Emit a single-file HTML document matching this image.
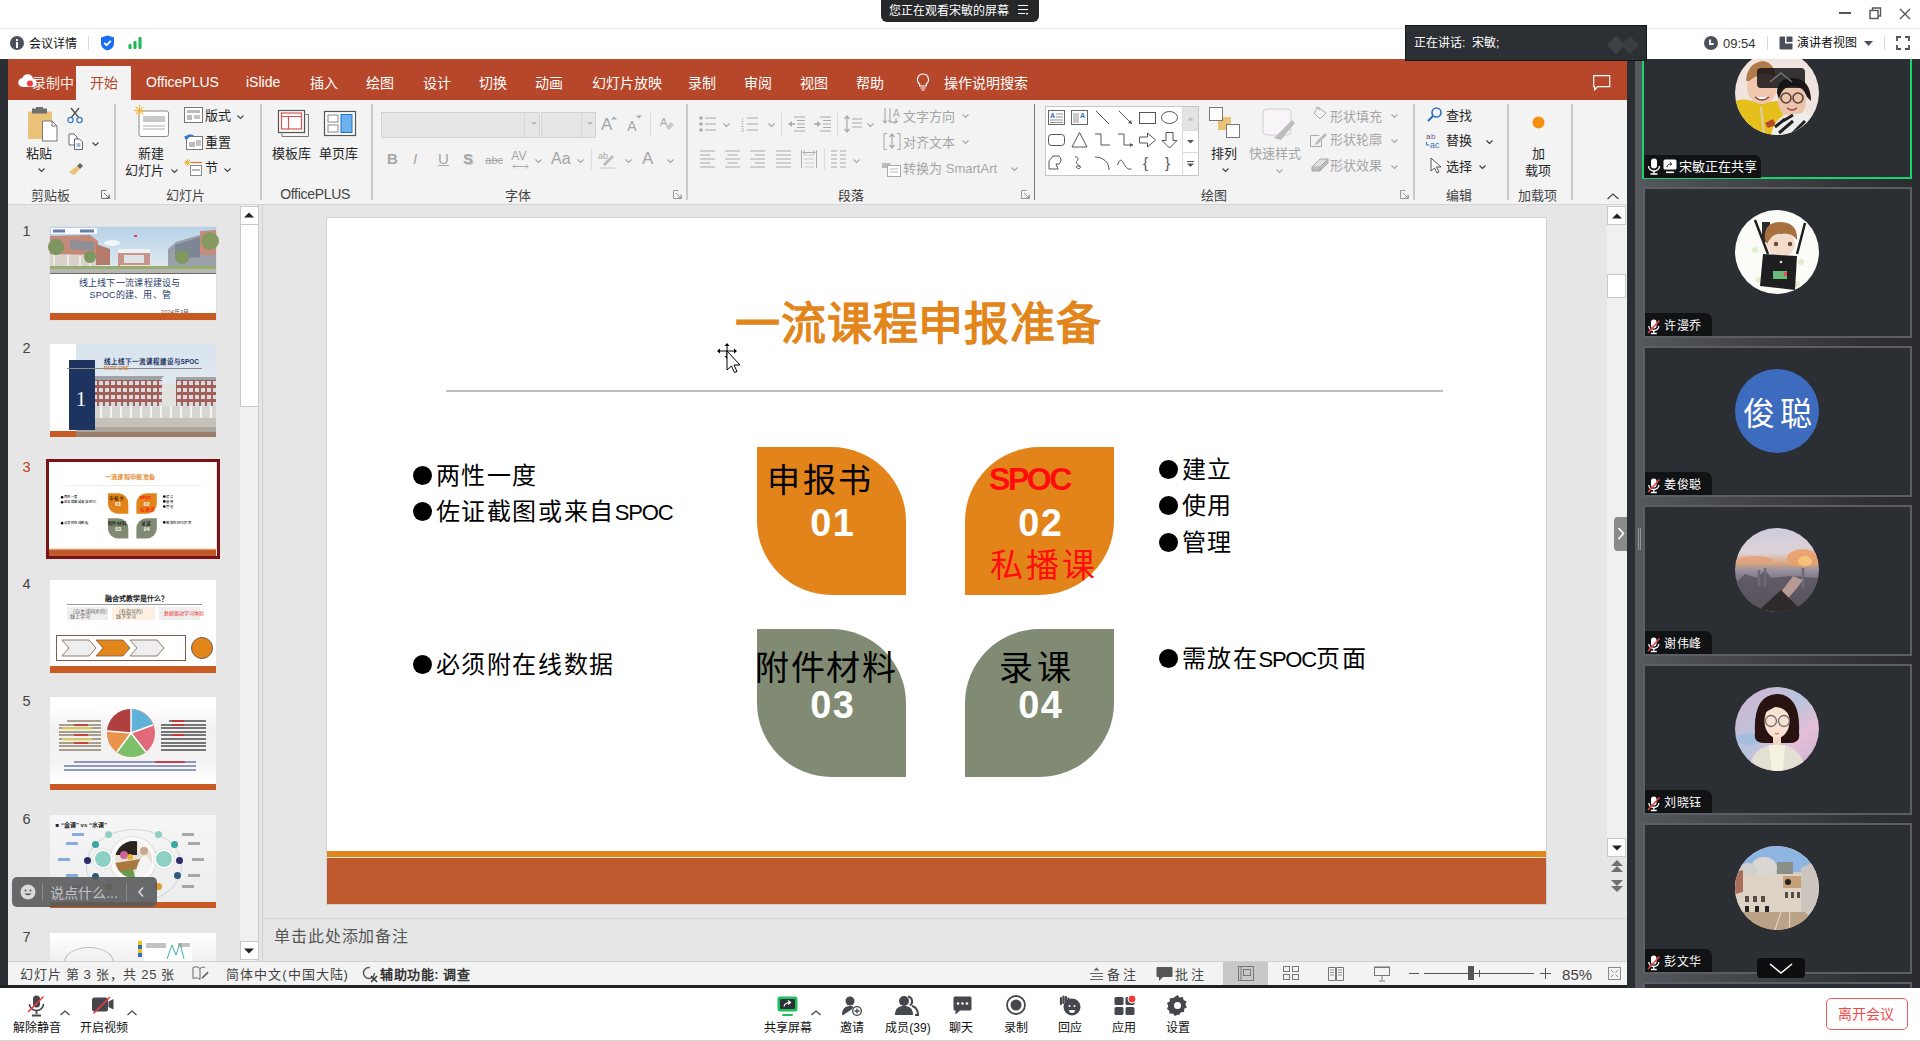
<!DOCTYPE html>
<html lang="zh-CN">
<head>
<meta charset="utf-8">
<style>
*{box-sizing:border-box;margin:0;padding:0}
html,body{width:1920px;height:1041px;overflow:hidden;background:#fff;font-family:"Liberation Sans",sans-serif;position:relative}
.a{position:absolute}
.t{position:absolute;white-space:nowrap;line-height:1}
svg{position:absolute;overflow:visible}
</style>
</head>
<body>
<!-- ============ TOP TENCENT BAR ============ -->
<div class="a" style="left:0;top:28px;width:1920px;height:1px;background:#e6e8ec"></div>
<div class="a" style="left:881px;top:0;width:158px;height:22px;background:#262729;border-radius:0 0 6px 6px"></div>
<div class="t" style="left:889px;top:5px;font-size:12px;color:#fff">您正在观看宋敏的屏幕</div>
<svg style="left:1017px;top:4px" width="12" height="12"><path d="M1 1.5h10M1 5.5h10M1 9.5h7" stroke="#fff" stroke-width="1.2"/><path d="M8.5 9l1.5 2 1.5-2z" fill="#fff"/></svg>
<!-- window controls -->
<div class="a" style="left:1839px;top:12px;width:12px;height:1.5px;background:#555"></div>
<svg style="left:1869px;top:7px" width="13" height="13"><rect x="1" y="3.5" width="8" height="8" fill="none" stroke="#555" stroke-width="1.4"/><path d="M3.5 3.5V1h8v8H9" fill="none" stroke="#555" stroke-width="1.4"/></svg>
<svg style="left:1899px;top:8px" width="12" height="12"><path d="M1 1l10 10M11 1L1 11" stroke="#555" stroke-width="1.4"/></svg>
<!-- meeting info row -->
<div class="a" style="left:10px;top:36px;width:14px;height:14px;border-radius:50%;background:#4b505b"></div>
<div class="a" style="left:16px;top:39px;width:2px;height:2px;background:#fff"></div>
<div class="a" style="left:16px;top:42px;width:2px;height:6px;background:#fff"></div>
<div class="t" style="left:29px;top:38px;font-size:12px;color:#111">会议详情</div>
<div class="a" style="left:88px;top:36px;width:1px;height:14px;background:#d8d8d8"></div>
<svg style="left:100px;top:35px" width="15" height="16"><path d="M7.5 0.5L14 2.5V8.5C14 12 11 14.5 7.5 15.5C4 14.5 1 12 1 8.5V2.5Z" fill="#1a6ef5"/><path d="M4.3 8l2.3 2.2 4.2-4.4" stroke="#fff" stroke-width="1.8" fill="none"/></svg>
<svg style="left:128px;top:36px" width="14" height="14"><rect x="0.5" y="8" width="3" height="5" rx="1" fill="#19b955"/><rect x="5.5" y="5" width="3" height="8" rx="1" fill="#19b955"/><rect x="10.5" y="1" width="3" height="12" rx="1" fill="#19b955"/></svg>
<!-- right info -->
<svg style="left:1704px;top:36px" width="14" height="14"><circle cx="7" cy="7" r="7" fill="#4b505b"/><path d="M6 3.5V8h3.5" stroke="#fff" stroke-width="1.8" fill="none"/></svg>
<div class="t" style="left:1723px;top:37px;font-size:13px;color:#333">09:54</div>
<div class="a" style="left:1767px;top:36px;width:1px;height:14px;background:#d8d8d8"></div>
<svg style="left:1779px;top:36px" width="14" height="14"><path d="M1.5 0.5h4.5v7h7.5v5a1 1 0 0 1-1 1H1.5a1 1 0 0 1-1-1V1.5a1 1 0 0 1 1-1z M7.5 0.5h5a1 1 0 0 1 1 1V6H7.5z" fill="#4b505b"/></svg>
<div class="t" style="left:1797px;top:37px;font-size:12px;color:#111">演讲者视图</div>
<svg style="left:1864px;top:41px" width="9" height="5"><path d="M0 0h9L4.5 5z" fill="#4b505b"/></svg>
<div class="a" style="left:1884px;top:36px;width:1px;height:14px;background:#d8d8d8"></div>
<svg style="left:1896px;top:36px" width="14" height="14"><path d="M1 5V1h4M9 1h4v4M13 9v4H9M5 13H1V9" stroke="#4b505b" stroke-width="1.8" fill="none"/></svg>

<!-- ============ LEFT DARK STRIP ============ -->
<div class="a" style="left:0;top:59px;width:8px;height:929px;background:#2b2e32"></div>

<!-- ============ PPT TAB BAR ============ -->
<div class="a" style="left:8px;top:59px;width:1619px;height:41px;background:#b7472a"></div>
<div class="a" style="left:76px;top:66px;width:55px;height:34px;background:#f3f3f3"></div>
<div class="t" style="left:90px;top:76px;font-size:14px;color:#b7472a">开始</div>
<div class="t" style="left:146px;top:75px;font-size:14px;color:#fff">OfficePLUS</div>
<div class="t" style="left:246px;top:75px;font-size:14px;color:#fff">iSlide</div>
<div class="t" style="left:310px;top:76px;font-size:14px;color:#fff">插入</div>
<div class="t" style="left:366px;top:76px;font-size:14px;color:#fff">绘图</div>
<div class="t" style="left:423px;top:76px;font-size:14px;color:#fff">设计</div>
<div class="t" style="left:479px;top:76px;font-size:14px;color:#fff">切换</div>
<div class="t" style="left:535px;top:76px;font-size:14px;color:#fff">动画</div>
<div class="t" style="left:592px;top:76px;font-size:14px;color:#fff">幻灯片放映</div>
<div class="t" style="left:688px;top:76px;font-size:14px;color:#fff">录制</div>
<div class="t" style="left:744px;top:76px;font-size:14px;color:#fff">审阅</div>
<div class="t" style="left:800px;top:76px;font-size:14px;color:#fff">视图</div>
<div class="t" style="left:856px;top:76px;font-size:14px;color:#fff">帮助</div>
<div class="t" style="left:944px;top:76px;font-size:14px;color:#fff">操作说明搜索</div>
<svg style="left:18px;top:74px" width="20" height="14"><path d="M5 13a4.5 4.5 0 0 1-.5-9A5.5 5.5 0 0 1 15 4.5a4.3 4.3 0 0 1 0 8.5z" fill="#fff"/><circle cx="12" cy="9.5" r="3" fill="#f23c3c"/></svg>
<div class="t" style="left:32px;top:76px;font-size:14px;color:#fff;opacity:.9">录制中</div>
<svg style="left:916px;top:73px" width="14" height="18"><path d="M7 1a5.5 5.5 0 0 0-3.3 9.9V13h6.6v-2.1A5.5 5.5 0 0 0 7 1z" fill="none" stroke="#fff" stroke-width="1.2"/><path d="M4.5 15h5M5.5 17h3" stroke="#fff" stroke-width="1.2"/></svg>
<svg style="left:1593px;top:75px" width="18" height="16"><path d="M0.7 0.7h16v11h-12l-3 3v-3h-1z" fill="none" stroke="#fff" stroke-width="1.2"/></svg>

<!-- ============ RIBBON ============ -->
<div class="a" style="left:8px;top:100px;width:1619px;height:104px;background:#f3f3f3"></div>
<div class="a" style="left:8px;top:204px;width:1619px;height:1px;background:#d5d5d5"></div>
<div class="a" style="left:114px;top:104px;width:2px;height:96px;background:#cacaca;"></div>
<div class="a" style="left:260px;top:104px;width:2px;height:96px;background:#cacaca;"></div>
<div class="a" style="left:371px;top:104px;width:2px;height:96px;background:#cacaca;"></div>
<div class="a" style="left:686px;top:104px;width:2px;height:96px;background:#cacaca;"></div>
<div class="a" style="left:1413px;top:104px;width:2px;height:96px;background:#cacaca;"></div>
<div class="a" style="left:1507px;top:104px;width:2px;height:96px;background:#cacaca;"></div>
<div class="a" style="left:1571px;top:104px;width:2px;height:96px;background:#cacaca;"></div>
<div class="a" style="left:1034px;top:104px;width:1px;height:96px;background:#7a7a7a;"></div>
<svg style="left:27px;top:107px" width="32" height="36" viewBox="0 0 32 36"><rect x="1" y="4.5" width="24" height="27.5" rx="1" fill="#eac27a"/><path d="M5 1.5h15v5H5z" fill="#6f6f6f"/><rect x="9" y="0" width="7" height="4" fill="#6f6f6f"/><path d="M15.5 14h9.5l5 5v15h-14.5z" fill="#fff" stroke="#777" stroke-width="1"/><path d="M25 14v5h5" fill="none" stroke="#777" stroke-width="1"/></svg>
<div class="t" style="left:26.2px;top:146.5px;font-size:13px;color:#262626;font-weight:normal;">粘贴</div>
<svg style="left:38px;top:168px" width="7" height="4" viewBox="0 0 7 4"><path d="M0.5 0.5L3.5 3.5L6.5 0.5" fill="none" stroke="#444" stroke-width="1.1"/></svg>
<svg style="left:67px;top:107px" width="16" height="17" viewBox="0 0 16 17"><path d="M4 1l8 10M12 1L4 11" stroke="#555" stroke-width="1.4"/><circle cx="3.5" cy="13" r="2.6" fill="none" stroke="#3c7dc4" stroke-width="1.3"/><circle cx="12.5" cy="13" r="2.6" fill="none" stroke="#3c7dc4" stroke-width="1.3"/></svg>
<svg style="left:68px;top:133px" width="16" height="17" viewBox="0 0 16 17"><path d="M1 1h5l3 3v8H1z" fill="#fff" stroke="#666" stroke-width="1"/><path d="M6.5 6h5l3 3v7.5h-8z" fill="#fff" stroke="#666" stroke-width="1"/><path d="M8.5 11h4M8.5 13h4" stroke="#3c7dc4" stroke-width="1"/></svg>
<svg style="left:92px;top:142px" width="7" height="4" viewBox="0 0 7 4"><path d="M0.5 0.5L3.5 3.5L6.5 0.5" fill="none" stroke="#444" stroke-width="1.1"/></svg>
<svg style="left:67px;top:160px" width="18" height="16" viewBox="0 0 18 16"><path d="M10 6l3-3 3 3-3 3z" fill="#666"/><path d="M2 12l8-6 3 3-6 6z" fill="#eac27a"/></svg>
<div class="t" style="left:31.2px;top:188.5px;font-size:13px;color:#444;font-weight:normal;">剪贴板</div>
<svg style="left:101px;top:190px" width="9" height="9" viewBox="0 0 9 9"><path d="M0.5 0.5h5M0.5 0.5v8h8v-3" fill="none" stroke="#777" stroke-width="1"/><path d="M3 3l5 5M8 4.5V8H4.5" fill="none" stroke="#777" stroke-width="1"/></svg>
<svg style="left:134px;top:105px" width="36" height="33" viewBox="0 0 36 33"><rect x="5" y="6" width="29.5" height="25.5" rx="2" fill="#fff" stroke="#8a8a8a" stroke-width="1"/><rect x="9" y="11" width="22" height="6" fill="#c9c9c9"/><path d="M9 21h22M9 24h22" stroke="#9a9a9a" stroke-width="0.8"/><g stroke="#f2b43c" stroke-width="1.1"><path d="M5.5 0v11M0 5.5h11M1.8 1.8l7.4 7.4M9.2 1.8L1.8 9.2"/></g></svg>
<div class="t" style="left:138.2px;top:146.5px;font-size:13px;color:#262626;font-weight:normal;">新建</div>
<div class="t" style="left:125.2px;top:163.5px;font-size:13px;color:#262626;font-weight:normal;">幻灯片</div>
<svg style="left:171px;top:169px" width="7" height="4" viewBox="0 0 7 4"><path d="M0.5 0.5L3.5 3.5L6.5 0.5" fill="none" stroke="#444" stroke-width="1.1"/></svg>
<svg style="left:184px;top:107px" width="20" height="17" viewBox="0 0 20 17"><rect x="0.5" y="0.5" width="18" height="15" fill="#fff" stroke="#777"/><rect x="3" y="3" width="13" height="3" fill="#bbb"/><rect x="3" y="8" width="5" height="5" fill="#bbb"/><path d="M10 9h6M10 11h6" stroke="#888" stroke-width="1"/></svg>
<div class="t" style="left:205.2px;top:108.5px;font-size:13px;color:#262626;font-weight:normal;">版式</div>
<svg style="left:237px;top:115px" width="7" height="4" viewBox="0 0 7 4"><path d="M0.5 0.5L3.5 3.5L6.5 0.5" fill="none" stroke="#444" stroke-width="1.1"/></svg>
<svg style="left:184px;top:133px" width="20" height="17" viewBox="0 0 20 17"><rect x="2.5" y="3.5" width="16" height="13" fill="#fff" stroke="#777"/><rect x="5" y="9" width="6" height="5" fill="#bbb"/><path d="M12 8h5M12 10h5M12 12h5" stroke="#888" stroke-width="1"/><path d="M1.5 6a5 4 0 0 1 8-3" fill="none" stroke="#2f7ad3" stroke-width="1.5"/><path d="M0 3l2.5 4 3-3z" fill="#2f7ad3"/></svg>
<div class="t" style="left:205.2px;top:135.5px;font-size:13px;color:#262626;font-weight:normal;">重置</div>
<svg style="left:184px;top:159px" width="20" height="18" viewBox="0 0 20 18"><g stroke="#f2b43c" stroke-width="1"><path d="M3.5 0v7M0 3.5h7M1 1l5 5M6 1L1 6"/></g><path d="M7 3.5h11" stroke="#d27b3a" stroke-width="1.2"/><rect x="6.5" y="6.5" width="11" height="10" fill="#fff" stroke="#888"/><rect x="8" y="10" width="8" height="2" fill="#bbb"/></svg>
<div class="t" style="left:205.2px;top:160.5px;font-size:13px;color:#262626;font-weight:normal;">节</div>
<svg style="left:224px;top:168px" width="7" height="4" viewBox="0 0 7 4"><path d="M0.5 0.5L3.5 3.5L6.5 0.5" fill="none" stroke="#444" stroke-width="1.1"/></svg>
<div class="t" style="left:166.2px;top:188.5px;font-size:13px;color:#444;font-weight:normal;">幻灯片</div>
<svg style="left:278px;top:110px" width="32" height="28" viewBox="0 0 32 28"><path d="M4 23.5v3h26.5V4.5h-3" fill="none" stroke="#777" stroke-width="1"/><rect x="0.5" y="0.5" width="26" height="22" fill="#fff" stroke="#555" stroke-width="1.2"/><rect x="3.5" y="3" width="20" height="16" fill="none" stroke="#d9534f" stroke-width="1.2"/><path d="M3.5 6.5h20M10.5 6.5V19" stroke="#d9534f" stroke-width="1.2"/></svg>
<svg style="left:324px;top:111px" width="32" height="25" viewBox="0 0 32 25"><rect x="0.5" y="0.5" width="31" height="24" fill="#fff" stroke="#555" stroke-width="1.2"/><rect x="4" y="4" width="10" height="7" fill="#fff" stroke="#888"/><rect x="4" y="14" width="10" height="7" fill="#fff" stroke="#888"/><rect x="17" y="3.5" width="11" height="18" fill="#6cb2ef" stroke="#1f6fc5" stroke-width="1"/></svg>
<div class="t" style="left:272.2px;top:146.5px;font-size:13px;color:#262626;font-weight:normal;">模板库</div>
<div class="t" style="left:319.2px;top:146.5px;font-size:13px;color:#262626;font-weight:normal;">单页库</div>
<div class="t" style="left:280.2px;top:187.2px;font-size:14px;color:#444;font-weight:normal;letter-spacing:-0.3px">OfficePLUS</div>
<div class="a" style="left:381px;top:112px;width:159px;height:26px;background:#e6e6e6;border:1px solid #d2d2d2"></div>
<div class="a" style="left:524px;top:113px;width:1px;height:24px;background:#d8d8d8;"></div>
<svg style="left:531px;top:122px" width="7" height="4" viewBox="0 0 7 4"><path d="M0 0h6L3 3z" fill="#bbb"/></svg>
<div class="a" style="left:541px;top:112px;width:55px;height:26px;background:#e6e6e6;border:1px solid #d2d2d2"></div>
<div class="a" style="left:581px;top:113px;width:1px;height:24px;background:#d8d8d8;"></div>
<svg style="left:587px;top:122px" width="7" height="4" viewBox="0 0 7 4"><path d="M0 0h6L3 3z" fill="#bbb"/></svg>
<div class="t" style="left:601.0px;top:115.8px;font-size:17px;color:#a6a6a6;font-weight:normal;">A</div>
<svg style="left:611px;top:116px" width="6" height="4" viewBox="0 0 6 4"><path d="M0 3.5L3 0.5 6 3.5z" fill="#aaa"/></svg>
<div class="t" style="left:627.2px;top:119.2px;font-size:14px;color:#a6a6a6;font-weight:normal;">A</div>
<svg style="left:636px;top:115px" width="6" height="4" viewBox="0 0 6 4"><path d="M0 0.5L3 3.5 6 0.5z" fill="#aaa"/></svg>
<div class="a" style="left:650px;top:113px;width:1px;height:24px;background:#dcdcdc;"></div>
<svg style="left:660px;top:116px" width="15" height="16" viewBox="0 0 15 16"><text x="0" y="10" font-size="11" fill="#aaa" font-family="Liberation Sans">A</text><path d="M6 11l5-5 3 3-5 5z" fill="#c8c8c8"/></svg>
<div class="t" style="left:387.1px;top:151.1px;font-size:15px;color:#a6a6a6;font-weight:bold;">B</div>
<div class="t" style="left:413.1px;top:151.1px;font-size:15px;color:#a6a6a6;font-weight:normal;"><i>I</i></div>
<div class="t" style="left:438.1px;top:151.1px;font-size:15px;color:#a6a6a6;font-weight:normal;"><u>U</u></div>
<div class="t" style="left:463.1px;top:151.1px;font-size:15px;color:#a6a6a6;font-weight:bold;text-shadow:1px 1px 1px #ccc">S</div>
<div class="t" style="left:485.3px;top:154.6px;font-size:11px;color:#a6a6a6;font-weight:normal;"><s>abc</s></div>
<div class="t" style="left:511.3px;top:150.4px;font-size:12px;color:#a6a6a6;font-weight:normal;">AV</div>
<svg style="left:512px;top:164px" width="17" height="5" viewBox="0 0 17 5"><path d="M1 2.5h15M3 0.5l-2 2 2 2M14 0.5l2 2-2 2" fill="none" stroke="#aaa" stroke-width="1"/></svg>
<svg style="left:535px;top:159px" width="7" height="4" viewBox="0 0 7 4"><path d="M0.5 0.5L3.5 3.5L6.5 0.5" fill="none" stroke="#a6a6a6" stroke-width="1.1"/></svg>
<div class="t" style="left:551.0px;top:150.9px;font-size:16px;color:#a6a6a6;font-weight:normal;">Aa</div>
<svg style="left:577px;top:159px" width="7" height="4" viewBox="0 0 7 4"><path d="M0.5 0.5L3.5 3.5L6.5 0.5" fill="none" stroke="#a6a6a6" stroke-width="1.1"/></svg>
<div class="a" style="left:591px;top:148px;width:1px;height:22px;background:#dcdcdc;"></div>
<svg style="left:598px;top:150px" width="18" height="19" viewBox="0 0 18 19"><text x="0" y="9" font-size="9" fill="#aaa" font-family="Liberation Sans">ab</text><path d="M5 14l9-9 2 2-9 9z" fill="#bbb"/><rect x="1" y="17" width="16" height="2" fill="#ddd"/></svg>
<svg style="left:625px;top:159px" width="7" height="4" viewBox="0 0 7 4"><path d="M0.5 0.5L3.5 3.5L6.5 0.5" fill="none" stroke="#a6a6a6" stroke-width="1.1"/></svg>
<div class="t" style="left:642.0px;top:149.8px;font-size:17px;color:#a6a6a6;font-weight:normal;">A</div>
<svg style="left:667px;top:159px" width="7" height="4" viewBox="0 0 7 4"><path d="M0.5 0.5L3.5 3.5L6.5 0.5" fill="none" stroke="#a6a6a6" stroke-width="1.1"/></svg>
<div class="t" style="left:505.2px;top:188.5px;font-size:13px;color:#444;font-weight:normal;">字体</div>
<svg style="left:673px;top:190px" width="9" height="9" viewBox="0 0 9 9"><path d="M0.5 0.5h5M0.5 0.5v8h8v-3" fill="none" stroke="#999" stroke-width="1"/><path d="M3 3l5 5M8 4.5V8H4.5" fill="none" stroke="#999" stroke-width="1"/></svg>
<svg style="left:699px;top:116px" width="18" height="17" viewBox="0 0 18 17"><circle cx="2" cy="2" r="1.8" fill="#aaa"/><circle cx="2" cy="8" r="1.8" fill="#aaa"/><circle cx="2" cy="14" r="1.8" fill="#aaa"/><path d="M6 2h11M6 8h11M6 14h11" stroke="#aaa" stroke-width="1"/></svg>
<svg style="left:723px;top:123px" width="7" height="4" viewBox="0 0 7 4"><path d="M0.5 0.5L3.5 3.5L6.5 0.5" fill="none" stroke="#a6a6a6" stroke-width="1.1"/></svg>
<svg style="left:741px;top:116px" width="18" height="17" viewBox="0 0 18 17"><text x="0" y="6" font-size="5" fill="#aaa" font-family="Liberation Sans">1</text><text x="0" y="11" font-size="5" fill="#aaa" font-family="Liberation Sans">2</text><text x="0" y="16" font-size="5" fill="#aaa" font-family="Liberation Sans">3</text><path d="M6 2h11M6 8h11M6 14h11" stroke="#aaa" stroke-width="1"/></svg>
<svg style="left:768px;top:123px" width="7" height="4" viewBox="0 0 7 4"><path d="M0.5 0.5L3.5 3.5L6.5 0.5" fill="none" stroke="#a6a6a6" stroke-width="1.1"/></svg>
<div class="a" style="left:781px;top:113px;width:1px;height:24px;background:#dcdcdc;"></div>
<svg style="left:787px;top:116px" width="18" height="17" viewBox="0 0 18 17"><path d="M7 1h11M10 4.5h8M10 8h8M10 11.5h8M7 15h11" stroke="#aaa" stroke-width="1"/><path d="M1 8l4-3v6z" fill="#aaa"/><path d="M4 8h4" stroke="#aaa" stroke-width="1.5"/></svg>
<svg style="left:813px;top:116px" width="18" height="17" viewBox="0 0 18 17"><path d="M7 1h11M10 4.5h8M10 8h8M10 11.5h8M7 15h11" stroke="#aaa" stroke-width="1"/><path d="M8 8l-4-3v6z" fill="#aaa"/><path d="M1 8h4" stroke="#aaa" stroke-width="1.5"/></svg>
<div class="a" style="left:837px;top:113px;width:1px;height:24px;background:#dcdcdc;"></div>
<svg style="left:844px;top:115px" width="18" height="19" viewBox="0 0 18 19"><path d="M3 1v16M0.5 4L3 1l2.5 3M0.5 14L3 17l2.5-3" fill="none" stroke="#aaa" stroke-width="1.2"/><path d="M8 4h10M8 8h10M8 12h10" stroke="#aaa" stroke-width="1"/></svg>
<svg style="left:867px;top:123px" width="7" height="4" viewBox="0 0 7 4"><path d="M0.5 0.5L3.5 3.5L6.5 0.5" fill="none" stroke="#a6a6a6" stroke-width="1.1"/></svg>
<svg style="left:700px;top:150px" width="16" height="18" viewBox="0 0 16 18"><path d="M0 1h15M0 5h10M0 9h15M0 13h10M0 17h15" stroke="#aaa" stroke-width="1"/></svg>
<svg style="left:725px;top:150px" width="16" height="18" viewBox="0 0 16 18"><path d="M0 1h15M2.5 5h10M0 9h15M2.5 13h10M0 17h15" stroke="#aaa" stroke-width="1"/></svg>
<svg style="left:750px;top:150px" width="16" height="18" viewBox="0 0 16 18"><path d="M0 1h15M5 5h10M0 9h15M5 13h10M0 17h15" stroke="#aaa" stroke-width="1"/></svg>
<svg style="left:776px;top:150px" width="16" height="18" viewBox="0 0 16 18"><path d="M0 1h15M0 5h15M0 9h15M0 13h15M0 17h15" stroke="#aaa" stroke-width="1"/></svg>
<svg style="left:801px;top:150px" width="16" height="18" viewBox="0 0 16 18"><path d="M0.5 0v18M15.5 0v18" stroke="#aaa" stroke-width="1"/><path d="M3 5h10M3 9h10M3 13h10M3 17h10" stroke="#ccc" stroke-width="1"/><path d="M2 2.5h12M2 2.5l2-2M2 2.5l2 2M14 2.5l-2-2M14 2.5l-2 2" stroke="#aaa" stroke-width="1" fill="none"/></svg>
<div class="a" style="left:824px;top:148px;width:1px;height:22px;background:#dcdcdc;"></div>
<svg style="left:831px;top:150px" width="16" height="18" viewBox="0 0 16 18"><path d="M0 1h6M0 5h6M0 9h6M0 13h6M0 17h6M9 1h6M9 5h6M9 9h6M9 13h6M9 17h6" stroke="#aaa" stroke-width="1"/></svg>
<svg style="left:853px;top:159px" width="7" height="4" viewBox="0 0 7 4"><path d="M0.5 0.5L3.5 3.5L6.5 0.5" fill="none" stroke="#a6a6a6" stroke-width="1.1"/></svg>
<svg style="left:883px;top:107px" width="18" height="18" viewBox="0 0 18 18"><path d="M2 1v15M0 13.5l2 2.5 2-2.5M7 1v15M5 13.5l7 2.5 2-2.5M7 1v15" fill="none" stroke="#aaa" stroke-width="1.1"/><text x="10" y="10" font-size="10" fill="#aaa" font-family="Liberation Sans">A</text><path d="M13 11v5M11 14l2 2 2-2" stroke="#aaa" fill="none"/></svg>
<div class="t" style="left:903.2px;top:109.5px;font-size:13px;color:#a6a6a6;font-weight:normal;">文字方向</div>
<svg style="left:962px;top:114px" width="7" height="4" viewBox="0 0 7 4"><path d="M0.5 0.5L3.5 3.5L6.5 0.5" fill="none" stroke="#a6a6a6" stroke-width="1.1"/></svg>
<svg style="left:883px;top:133px" width="18" height="18" viewBox="0 0 18 18"><path d="M1 0.5h3M1 0.5v16h3M17 0.5h-3M17 0.5v16h-3" fill="none" stroke="#aaa" stroke-width="1"/><path d="M9 1v14M6.5 4L9 1l2.5 3M6.5 12L9 15l2.5-3" fill="none" stroke="#aaa" stroke-width="1.2"/></svg>
<div class="t" style="left:903.2px;top:135.5px;font-size:13px;color:#a6a6a6;font-weight:normal;">对齐文本</div>
<svg style="left:962px;top:140px" width="7" height="4" viewBox="0 0 7 4"><path d="M0.5 0.5L3.5 3.5L6.5 0.5" fill="none" stroke="#a6a6a6" stroke-width="1.1"/></svg>
<svg style="left:882px;top:160px" width="19" height="17" viewBox="0 0 19 17"><path d="M0 3h9l-3 5H0z" fill="#bbb"/><rect x="5.5" y="5.5" width="13" height="11" fill="#fff" stroke="#aaa"/><path d="M8 9h8M8 12h8" stroke="#bbb"/></svg>
<div class="t" style="left:903.2px;top:161.5px;font-size:13px;color:#a6a6a6;font-weight:normal;">转换为 SmartArt</div>
<svg style="left:1011px;top:167px" width="7" height="4" viewBox="0 0 7 4"><path d="M0.5 0.5L3.5 3.5L6.5 0.5" fill="none" stroke="#a6a6a6" stroke-width="1.1"/></svg>
<div class="t" style="left:837.7px;top:188.5px;font-size:13px;color:#333;font-weight:normal;">段落</div>
<svg style="left:1021px;top:190px" width="9" height="9" viewBox="0 0 9 9"><path d="M0.5 0.5h5M0.5 0.5v8h8v-3" fill="none" stroke="#999" stroke-width="1"/><path d="M3 3l5 5M8 4.5V8H4.5" fill="none" stroke="#999" stroke-width="1"/></svg>
<div class="a" style="left:1045px;top:106px;width:154px;height:70px;background:#fff;border:1px solid #c6c6c6"></div>
<div class="a" style="left:1182px;top:107px;width:16px;height:23px;background:#e3e3e3;"></div>
<div class="a" style="left:1182px;top:107px;width:1px;height:68px;background:#dcdcdc;"></div>
<div class="a" style="left:1183px;top:130px;width:15px;height:1px;background:#dcdcdc;"></div>
<div class="a" style="left:1183px;top:152px;width:15px;height:1px;background:#dcdcdc;"></div>
<svg style="left:1187px;top:117px" width="7" height="4" viewBox="0 0 7 4"><path d="M0 3.5L3.5 0 7 3.5z" fill="#c2c2c2"/></svg>
<svg style="left:1187px;top:140px" width="7" height="4" viewBox="0 0 7 4"><path d="M0 0h7L3.5 3.5z" fill="#555"/></svg>
<svg style="left:1187px;top:161px" width="7" height="6" viewBox="0 0 7 6"><path d="M0 0.5h7" stroke="#555"/><path d="M0 2.5h7L3.5 6z" fill="#555"/></svg>
<svg style="left:1048px;top:110px" width="18" height="16" viewBox="0 0 18 16"><rect x="0.5" y="0.5" width="16" height="14" fill="#fff" stroke="#666"/><text x="2" y="8" font-size="7" font-weight="bold" fill="#2f6fc0" font-family="Liberation Sans">A</text><path d="M8 4h7M8 7h7M2 10h13M2 12.5h13" stroke="#777" stroke-width="0.8"/></svg>
<svg style="left:1071px;top:110px" width="18" height="16" viewBox="0 0 18 16"><rect x="0.5" y="0.5" width="16" height="14" fill="#fff" stroke="#666"/><text x="9" y="8" font-size="7" font-weight="bold" fill="#2f6fc0" font-family="Liberation Sans">A</text><path d="M3 3v10M5 3v10M7 3v10" stroke="#777" stroke-width="0.8"/></svg>
<svg style="left:1094px;top:110px" width="18" height="16" viewBox="0 0 18 16"><path d="M2 1l13 13" stroke="#555"/></svg>
<svg style="left:1117px;top:110px" width="18" height="16" viewBox="0 0 18 16"><path d="M2 1l13 13" stroke="#555"/><path d="M15 14l-4-1 3-3z" fill="#555"/></svg>
<svg style="left:1139px;top:110px" width="18" height="16" viewBox="0 0 18 16"><rect x="0.5" y="2.5" width="16" height="11" fill="none" stroke="#555"/></svg>
<svg style="left:1161px;top:110px" width="18" height="16" viewBox="0 0 18 16"><ellipse cx="8.5" cy="7.5" rx="8" ry="6" fill="none" stroke="#555"/></svg>
<svg style="left:1048px;top:132px" width="18" height="16" viewBox="0 0 18 16"><rect x="0.5" y="2.5" width="16" height="11" rx="3" fill="none" stroke="#555"/></svg>
<svg style="left:1071px;top:132px" width="18" height="16" viewBox="0 0 18 16"><path d="M8.5 0.5L16 15H1z" fill="none" stroke="#555"/></svg>
<svg style="left:1094px;top:132px" width="18" height="16" viewBox="0 0 18 16"><path d="M1 2h6v11h9" fill="none" stroke="#555"/></svg>
<svg style="left:1117px;top:132px" width="18" height="16" viewBox="0 0 18 16"><path d="M1 2h6v11h9" fill="none" stroke="#555"/><path d="M16 13l-3-2v4z" fill="#555"/></svg>
<svg style="left:1139px;top:132px" width="18" height="16" viewBox="0 0 18 16"><path d="M0.5 5h8V1l8 7-8 7v-4h-8z" fill="none" stroke="#555"/></svg>
<svg style="left:1161px;top:132px" width="18" height="16" viewBox="0 0 18 16"><path d="M5 0.5h7v8h4l-7.5 7.5L1 8.5h4z" fill="none" stroke="#555"/></svg>
<svg style="left:1048px;top:155px" width="18" height="16" viewBox="0 0 18 16"><path d="M1 14V6l4-5h6a5 5 0 0 1 0 8h-3l2 5z" fill="none" stroke="#555"/></svg>
<svg style="left:1071px;top:155px" width="18" height="16" viewBox="0 0 18 16"><path d="M4 2c3-1 4 2 2 4s1 4 3 5-1 4-3 2 1-3 3-1" fill="none" stroke="#555"/></svg>
<svg style="left:1094px;top:155px" width="18" height="16" viewBox="0 0 18 16"><path d="M1 2c8 0 14 5 14 13" fill="none" stroke="#555"/></svg>
<svg style="left:1117px;top:155px" width="18" height="16" viewBox="0 0 18 16"><path d="M0.5 10c2-6 4-6 6-2s4 7 8 6" fill="none" stroke="#555"/></svg>
<svg style="left:1139px;top:155px" width="18" height="16" viewBox="0 0 18 16"><text x="4" y="13" font-size="15" fill="#555" font-family="Liberation Sans">{</text></svg>
<svg style="left:1161px;top:155px" width="18" height="16" viewBox="0 0 18 16"><text x="4" y="13" font-size="15" fill="#555" font-family="Liberation Sans">}</text></svg>
<svg style="left:1209px;top:107px" width="32" height="32" viewBox="0 0 32 32"><rect x="9" y="10" width="13" height="13" fill="#eac27a"/><rect x="0.5" y="0.5" width="13" height="13" fill="#fff" stroke="#777"/><rect x="17.5" y="17.5" width="13" height="13" fill="#fff" stroke="#777"/></svg>
<div class="t" style="left:1211.2px;top:146.5px;font-size:13px;color:#262626;font-weight:normal;">排列</div>
<svg style="left:1222px;top:168px" width="7" height="4" viewBox="0 0 7 4"><path d="M0.5 0.5L3.5 3.5L6.5 0.5" fill="none" stroke="#444" stroke-width="1.1"/></svg>
<svg style="left:1262px;top:108px" width="35" height="34" viewBox="0 0 35 34"><rect x="1" y="1" width="28" height="26" rx="4" fill="#f8f5f9" stroke="#cfcfcf"/><path d="M12 30l18-18 3 3-14 17z" fill="#bdbdbd"/></svg>
<div class="t" style="left:1249.2px;top:146.5px;font-size:13px;color:#a6a6a6;font-weight:normal;">快速样式</div>
<svg style="left:1276px;top:169px" width="7" height="4" viewBox="0 0 7 4"><path d="M0.5 0.5L3.5 3.5L6.5 0.5" fill="none" stroke="#a6a6a6" stroke-width="1.1"/></svg>
<svg style="left:1313px;top:106px" width="15" height="14" viewBox="0 0 15 14"><path d="M5 1l8 6-6 6-6-6z" fill="none" stroke="#aaa"/><path d="M3 1l4 3" stroke="#aaa"/></svg>
<div class="t" style="left:1330.2px;top:109.5px;font-size:13px;color:#a6a6a6;font-weight:normal;">形状填充</div>
<svg style="left:1391px;top:114px" width="7" height="4" viewBox="0 0 7 4"><path d="M0.5 0.5L3.5 3.5L6.5 0.5" fill="none" stroke="#a6a6a6" stroke-width="1.1"/></svg>
<svg style="left:1310px;top:132px" width="18" height="15" viewBox="0 0 18 15"><path d="M0.5 3.5h9M0.5 3.5v11h11v-6" fill="none" stroke="#aaa"/><path d="M6 10l9-9 2 2-9 9-3 1z" fill="#bbb"/></svg>
<div class="t" style="left:1330.2px;top:132.5px;font-size:13px;color:#a6a6a6;font-weight:normal;">形状轮廓</div>
<svg style="left:1391px;top:139px" width="7" height="4" viewBox="0 0 7 4"><path d="M0.5 0.5L3.5 3.5L6.5 0.5" fill="none" stroke="#a6a6a6" stroke-width="1.1"/></svg>
<svg style="left:1311px;top:158px" width="18" height="15" viewBox="0 0 18 15"><path d="M1 9l8-8h8l-8 8z" fill="#e0e0e0" stroke="#aaa"/><path d="M1 9v4h8V9M9 9l8-8v4l-8 8" fill="#bdbdbd" stroke="#aaa"/></svg>
<div class="t" style="left:1330.2px;top:158.5px;font-size:13px;color:#a6a6a6;font-weight:normal;">形状效果</div>
<svg style="left:1391px;top:165px" width="7" height="4" viewBox="0 0 7 4"><path d="M0.5 0.5L3.5 3.5L6.5 0.5" fill="none" stroke="#a6a6a6" stroke-width="1.1"/></svg>
<div class="t" style="left:1200.7px;top:188.5px;font-size:13px;color:#444;font-weight:normal;">绘图</div>
<svg style="left:1400px;top:190px" width="10" height="10" viewBox="0 0 10 10"><path d="M0.5 0.5h5M0.5 0.5v8h8v-3" fill="none" stroke="#999" stroke-width="1"/><path d="M3 3l5 5M8 4.5V8H4.5" fill="none" stroke="#999" stroke-width="1"/></svg>
<svg style="left:1427px;top:107px" width="15" height="15" viewBox="0 0 15 15"><circle cx="9.5" cy="5.5" r="4.5" fill="none" stroke="#2f6fc0" stroke-width="1.6"/><path d="M6.3 8.7L1 14" stroke="#2f6fc0" stroke-width="2"/></svg>
<div class="t" style="left:1446.2px;top:108.5px;font-size:13px;color:#262626;font-weight:normal;">查找</div>
<svg style="left:1426px;top:132px" width="18" height="17" viewBox="0 0 18 17"><text x="0" y="7" font-size="8" fill="#555" font-family="Liberation Sans">a</text><text x="5" y="7" font-size="8" fill="#7a4fb5" font-family="Liberation Sans">b</text><text x="4" y="16" font-size="9" fill="#2f6fc0" font-family="Liberation Sans">ac</text><path d="M0.5 10v3h3" fill="none" stroke="#2f6fc0"/></svg>
<div class="t" style="left:1446.2px;top:133.5px;font-size:13px;color:#262626;font-weight:normal;">替换</div>
<svg style="left:1486px;top:140px" width="7" height="4" viewBox="0 0 7 4"><path d="M0.5 0.5L3.5 3.5L6.5 0.5" fill="none" stroke="#333" stroke-width="1.1"/></svg>
<svg style="left:1430px;top:157px" width="12" height="17" viewBox="0 0 12 17"><path d="M1 1v13l3.5-3 2.5 5 2-1-2.5-5H11z" fill="#fff" stroke="#555"/></svg>
<div class="t" style="left:1446.2px;top:159.5px;font-size:13px;color:#262626;font-weight:normal;">选择</div>
<svg style="left:1479px;top:165px" width="7" height="4" viewBox="0 0 7 4"><path d="M0.5 0.5L3.5 3.5L6.5 0.5" fill="none" stroke="#333" stroke-width="1.1"/></svg>
<div class="t" style="left:1446.2px;top:188.5px;font-size:13px;color:#444;font-weight:normal;">编辑</div>
<svg style="left:1532px;top:116px" width="13" height="13" viewBox="0 0 13 13"><circle cx="6.5" cy="6.5" r="6" fill="#f5900f"/></svg>
<div class="t" style="left:1532.2px;top:146.5px;font-size:13px;color:#262626;font-weight:normal;">加</div>
<div class="t" style="left:1525.2px;top:163.5px;font-size:13px;color:#262626;font-weight:normal;">载项</div>
<div class="t" style="left:1518.2px;top:188.5px;font-size:13px;color:#444;font-weight:normal;">加载项</div>
<svg style="left:1607px;top:193px" width="12" height="7" viewBox="0 0 12 7"><path d="M0.5 6L6 1l5.5 5" fill="none" stroke="#444" stroke-width="1.2"/></svg>

<!-- ============ WORK AREA ============ -->
<div class="a" style="left:8px;top:205px;width:1619px;height:756px;background:#e6e6e6"></div>
<div class="a" style="left:240px;top:205px;width:19px;height:756px;background:#f0f0f0;"></div>
<div class="a" style="left:258px;top:205px;width:1px;height:756px;background:#c9c9c9;"></div>
<div class="a" style="left:240px;top:206px;width:19px;height:19px;background:#fff;border:1px solid #c9c9c9"></div>
<svg style="left:244px;top:212px" width="10" height="6" viewBox="0 0 10 6"><path d="M0 5.5L5 0.5 10 5.5z" fill="#222"/></svg>
<div class="a" style="left:240px;top:224px;width:19px;height:183px;background:#fff;border:1px solid #c9c9c9"></div>
<div class="a" style="left:240px;top:941px;width:19px;height:19px;background:#fff;border:1px solid #c9c9c9"></div>
<svg style="left:244px;top:948px" width="10" height="6" viewBox="0 0 10 6"><path d="M0 0.5h10L5 5.5z" fill="#222"/></svg>
<div class="a" style="left:262px;top:205px;width:1px;height:756px;background:#cfcfcf;"></div>
<div class="t" style="left:22.6px;top:224.1px;font-size:14.5px;color:#444;font-weight:normal;">1</div>
<div class="t" style="left:22.6px;top:341.1px;font-size:14.5px;color:#444;font-weight:normal;">2</div>
<div class="t" style="left:22.6px;top:460.1px;font-size:14.5px;color:#c0401e;font-weight:normal;">3</div>
<div class="t" style="left:22.6px;top:577.1px;font-size:14.5px;color:#444;font-weight:normal;">4</div>
<div class="t" style="left:22.6px;top:694.1px;font-size:14.5px;color:#444;font-weight:normal;">5</div>
<div class="t" style="left:22.6px;top:812.1px;font-size:14.5px;color:#444;font-weight:normal;">6</div>
<div class="t" style="left:22.6px;top:930.1px;font-size:14.5px;color:#444;font-weight:normal;">7</div>
<div class="a" style="left:50px;top:227px;width:166px;height:93px;background:#fff;box-shadow:0 0 1px #bbb"></div>
<svg style="left:50px;top:227px" width="166" height="47" viewBox="0 0 166 47"><defs><linearGradient id="sk1" x1="0" y1="0" x2="0" y2="1"><stop offset="0" stop-color="#b7d2ea"/><stop offset="1" stop-color="#e4ecf0"/></linearGradient></defs><rect width="166" height="47" fill="url(#sk1)"/><ellipse cx="62" cy="16" rx="8" ry="3" fill="#f2f6f8"/><path d="M0 9 L40 8 L48 14 L48 40 L0 42z" fill="#c38a7a"/><path d="M20 13 L44 15 L44 24 L20 22z" fill="#8f8f96"/><path d="M0 27 L48 28 L48 41 L0 42z" fill="#d9d2ca"/><path d="M4 28v13M18 28v13M30 29v12M40 29v12" stroke="#f4f2ee" stroke-width="1.5"/><path d="M46 17 L60 22 L60 38 L46 38z" fill="#b47a6a"/><rect x="68" y="22" width="32" height="4" fill="#eef2f4"/><rect x="68" y="26" width="32" height="13" fill="#c8948a"/><rect x="74" y="28" width="20" height="8" fill="#dde2e6"/><rect x="70" y="38" width="30" height="5" fill="#efe6d6"/><path d="M166 3 L126 15 L118 22 L118 40 L166 42z" fill="#9aa0aa"/><path d="M150 4 L166 3 L166 28 L150 28z" fill="#c48c7c"/><path d="M125 18 L150 10 L150 30 L125 32z" fill="#7d8694"/><circle cx="6" cy="20" r="8" fill="#7f9560"/><circle cx="40" cy="30" r="6" fill="#7d955e"/><circle cx="132" cy="30" r="7" fill="#7f9860"/><circle cx="160" cy="14" r="9" fill="#86995f"/><rect x="0" y="39" width="166" height="4" fill="#96ae6e"/><rect x="0" y="42" width="166" height="4" fill="#b8b6b2"/><rect x="0" y="46" width="166" height="1" fill="#6a6a6a"/><rect x="1" y="1" width="46" height="6" fill="#fff" opacity=".9"/><rect x="3" y="2.5" width="12" height="3" fill="#2a4a8a" opacity=".7"/><rect x="30" y="2.5" width="14" height="3" fill="#2a4a8a" opacity=".7"/><rect x="84" y="8" width="3" height="2" fill="#e04050"/></svg>
<div class="t" style="left:78.5px;top:278.6px;font-size:9px;color:#2a3a6a;font-weight:normal;letter-spacing:0.3px">线上线下一流课程建设与</div>
<div class="t" style="left:89.5px;top:290.6px;font-size:9px;color:#2a3a6a;font-weight:normal;letter-spacing:0.2px">SPOC的建、用、管</div>
<div class="t" style="left:160.6px;top:308.8px;font-size:6px;color:#555;font-weight:normal;">2024年3月</div>
<div class="a" style="left:50px;top:313px;width:166px;height:7px;background:#c85a24;"></div>
<svg style="left:50px;top:344px" width="166" height="93" viewBox="0 0 166 93"><defs><linearGradient id="sk2" x1="0" y1="0" x2="0" y2="1"><stop offset="0" stop-color="#d8e3ee"/><stop offset="1" stop-color="#eef1f3"/></linearGradient><pattern id="win2" width="6" height="7" patternUnits="userSpaceOnUse"><rect width="6" height="7" fill="#a45e55"/><rect x="1" y="2" width="4" height="4" fill="#d4dbe2"/></pattern><pattern id="col2" width="10" height="12" patternUnits="userSpaceOnUse"><rect width="10" height="12" fill="#d8d6d0"/><rect x="0" y="0" width="2" height="12" fill="#f4f4f2"/></pattern></defs><rect width="166" height="93" fill="url(#sk2)"/><rect x="0" y="0" width="26" height="93" fill="#fff"/><path d="M26 32 H114 L110 36 H26z" fill="#9ea3a8"/><rect x="26" y="36" width="86" height="26" fill="url(#win2)"/><rect x="112" y="40" width="14" height="34" fill="#e2e2de"/><path d="M126 33 H166 V36 H126z" fill="#9ea3a8"/><rect x="126" y="36" width="40" height="28" fill="url(#win2)"/><rect x="26" y="62" width="140" height="12" fill="url(#col2)"/><rect x="26" y="74" width="140" height="9" fill="#c6c2ba"/><rect x="26" y="83" width="140" height="5" fill="#a9a59c"/><rect x="26" y="88" width="140" height="5" fill="#9c7e6c"/><rect x="0" y="87" width="26" height="6" fill="#c85a24"/></svg>
<div class="a" style="left:69px;top:360px;width:26px;height:70px;background:#1d3461;"></div>
<div class="t" style="left:75.7px;top:389.3px;font-size:21px;color:#fff;font-weight:normal;font-family:Liberation Serif">1</div>
<div class="t" style="left:103.6px;top:358.7px;font-size:6.5px;color:#1d3461;font-weight:bold;">线上线下一流课程建设与SPOC</div>
<div class="a" style="left:67px;top:368px;width:135px;height:1px;background:#8a8a8a;"></div>
<div class="t" style="left:103.7px;top:366.4px;font-size:5px;color:#c8804a;font-weight:bold;">PART ONE</div>
<div class="a" style="left:50px;top:580px;width:166px;height:93px;background:#fff;"></div>
<div class="t" style="left:104.6px;top:594.7px;font-size:7px;color:#222;font-weight:bold;">融合式教学是什么？</div>
<div class="a" style="left:67px;top:604px;width:135px;height:1px;background:#999;"></div>
<div class="a" style="left:67px;top:607px;width:41px;height:13px;background:#eeeeee;"></div>
<div class="a" style="left:112px;top:607px;width:43px;height:13px;background:#fdf0e0;"></div>
<div class="a" style="left:159px;top:607px;width:41px;height:13px;background:#eeeeee;"></div>
<div class="t" style="left:69.7px;top:608.8px;font-size:5px;color:#555;font-weight:normal;">（自主或同步的）<br>线上学习</div>
<div class="t" style="left:115.7px;top:608.8px;font-size:5px;color:#555;font-weight:normal;">（有指导的）<br>线下学习</div>
<div class="t" style="left:163.7px;top:610.8px;font-size:5px;color:#e33;font-weight:normal;">数据驱动学习体验</div>
<div class="a" style="left:56px;top:635px;width:130px;height:26px;background:#fff;border:1px solid #7a5a48"></div>
<svg style="left:62px;top:640px" width="110" height="16" viewBox="0 0 110 16"><path d="M0 0h27l7 8-7 8H0l7-8z" fill="#eee" stroke="#7a5a48" stroke-width="0.8"/><path d="M34 0h27l7 8-7 8H34l7-8z" fill="#e2851b" stroke="#7a5a48" stroke-width="0.8"/><path d="M68 0h27l7 8-7 8H68l7-8z" fill="#eee" stroke="#7a5a48" stroke-width="0.8"/></svg>
<div class="a" style="left:191px;top:637px;width:22px;height:22px;background:#e2851b;border-radius:50%;border:1px solid #7a5a48"></div>
<div class="a" style="left:50px;top:666px;width:166px;height:7px;background:#c85a24;"></div>
<div class="a" style="left:50px;top:697px;width:166px;height:93px;background:#fff;"></div>
<div class="a" style="left:50px;top:707px;width:166px;height:75px;background:linear-gradient(180deg,#fff,#f1f1f1 30%,#f3f3f3 70%,#fff);"></div>
<div class="a" style="left:67px;top:720.0px;width:34px;height:2px;background:#6a5a3a;opacity:.55"></div>
<div class="a" style="left:59px;top:723.6px;width:42px;height:2px;background:#6a5a3a;opacity:.55"></div>
<div class="a" style="left:74px;top:723.6px;width:14px;height:2px;background:#d03030;opacity:.8"></div>
<div class="a" style="left:59px;top:727.2px;width:42px;height:2px;background:#6a5a3a;opacity:.55"></div>
<div class="a" style="left:62px;top:726.7px;width:30px;height:3px;background:#f0e060;opacity:.6"></div>
<div class="a" style="left:59px;top:730.8px;width:42px;height:2px;background:#6a5a3a;opacity:.55"></div>
<div class="a" style="left:59px;top:734.4px;width:42px;height:2px;background:#6a5a3a;opacity:.55"></div>
<div class="a" style="left:74px;top:734.4px;width:14px;height:2px;background:#d03030;opacity:.8"></div>
<div class="a" style="left:59px;top:738.0px;width:42px;height:2px;background:#6a5a3a;opacity:.55"></div>
<div class="a" style="left:62px;top:737.5px;width:30px;height:3px;background:#f0e060;opacity:.6"></div>
<div class="a" style="left:59px;top:741.6px;width:42px;height:2px;background:#6a5a3a;opacity:.55"></div>
<div class="a" style="left:74px;top:741.6px;width:14px;height:2px;background:#d03030;opacity:.8"></div>
<div class="a" style="left:59px;top:745.2px;width:42px;height:2px;background:#6a5a3a;opacity:.55"></div>
<div class="a" style="left:59px;top:748.8px;width:42px;height:2px;background:#6a5a3a;opacity:.55"></div>
<svg style="left:106px;top:708px" width="50" height="50" viewBox="0 0 50 50"><circle cx="25" cy="25" r="24" fill="#e98a7a"/><path d="M25 25L25 1A24 24 0 0 1 47 17z" fill="#5fb3d8"/><path d="M25 25L47 17A24 24 0 0 1 40 44z" fill="#e06a7a"/><path d="M25 25L40 44A24 24 0 0 1 11 44z" fill="#7cc06a"/><path d="M25 25L11 44A24 24 0 0 1 1 23z" fill="#e8944a"/><path d="M25 25L1 23A24 24 0 0 1 25 1z" fill="#b04040"/><g stroke="#fff" stroke-width="1.5"><path d="M25 25V1M25 25L47 17M25 25L40 44M25 25L11 44M25 25L1 23"/></g></svg>
<div class="a" style="left:169px;top:720.0px;width:37px;height:2px;background:#222;opacity:.6"></div>
<div class="a" style="left:172px;top:720.0px;width:12px;height:2px;background:#d03030;opacity:.8"></div>
<div class="a" style="left:161px;top:723.6px;width:45px;height:2px;background:#222;opacity:.6"></div>
<div class="a" style="left:172px;top:723.6px;width:12px;height:2px;background:#d03030;opacity:.8"></div>
<div class="a" style="left:161px;top:727.2px;width:45px;height:2px;background:#222;opacity:.6"></div>
<div class="a" style="left:161px;top:730.8px;width:45px;height:2px;background:#222;opacity:.6"></div>
<div class="a" style="left:161px;top:734.4px;width:45px;height:2px;background:#222;opacity:.6"></div>
<div class="a" style="left:172px;top:734.4px;width:12px;height:2px;background:#d03030;opacity:.8"></div>
<div class="a" style="left:161px;top:738.0px;width:45px;height:2px;background:#222;opacity:.6"></div>
<div class="a" style="left:161px;top:741.6px;width:45px;height:2px;background:#222;opacity:.6"></div>
<div class="a" style="left:161px;top:745.2px;width:45px;height:2px;background:#222;opacity:.6"></div>
<div class="a" style="left:161px;top:748.8px;width:45px;height:2px;background:#222;opacity:.6"></div>
<div class="a" style="left:74px;top:761.0px;width:122px;height:2px;background:#2a3a8a;opacity:.5"></div>
<div class="a" style="left:64px;top:764.8px;width:132px;height:2px;background:#2a3a8a;opacity:.5"></div>
<div class="a" style="left:64px;top:768.6px;width:132px;height:2px;background:#2a3a8a;opacity:.5"></div>
<div class="a" style="left:155px;top:761px;width:30px;height:2px;background:#d03030;opacity:.8"></div>
<div class="a" style="left:50px;top:784px;width:166px;height:6px;background:#c85a24;"></div>
<div class="a" style="left:50px;top:815px;width:166px;height:93px;background:linear-gradient(180deg,#f6f6f6,#ececec);"></div>
<div class="t" style="left:55.6px;top:821.8px;font-size:6px;color:#222;font-weight:bold;">■ “金课” vs “水课”</div>
<div class="a" style="left:86px;top:829px;width:96px;height:74px;background:transparent;border:1px solid #d4d8d8;border-radius:50%"></div>
<div class="a" style="left:110px;top:837px;width:46px;height:46px;background:#fafafa;border-radius:50%;box-shadow:0 0 2px #bbb"></div>
<svg style="left:115px;top:841px" width="37" height="37" viewBox="0 0 37 37"><defs><clipPath id="tp6"><circle cx="18.5" cy="18.5" r="18.5"/></clipPath></defs><g clip-path="url(#tp6)"><rect width="37" height="37" fill="#e8e0d4"/><rect x="0" y="0" width="22" height="14" fill="#2a2420"/><rect x="23" y="0" width="14" height="10" fill="#f3efe8"/><path d="M0 22 L26 18 L30 26 L4 32z" fill="#a87840"/><circle cx="9" cy="14" r="4" fill="#d060a0"/><circle cx="15" cy="16" r="3" fill="#e8b030"/><path d="M20 37 Q22 18 30 14 Q37 16 37 37z" fill="#f4f4f4"/><circle cx="29" cy="10" r="4" fill="#c8a890"/><path d="M6 30 L18 28 L20 37 L8 37z" fill="#6a9a4a"/></g></svg>
<div class="a" style="left:93px;top:849px;width:20px;height:20px;background:#8fd0c4;border-radius:50%;border:2px solid #fff;box-shadow:0 0 1px #999"></div>
<div class="a" style="left:154px;top:849px;width:20px;height:20px;background:#8fd0c4;border-radius:50%;border:2px solid #fff;box-shadow:0 0 1px #999"></div>
<div class="a" style="left:105px;top:831px;width:7px;height:7px;background:#8fd0c4;border-radius:50%"></div>
<div class="a" style="left:92px;top:841px;width:7px;height:7px;background:#3aa6a0;border-radius:50%"></div>
<div class="a" style="left:84px;top:857px;width:7px;height:7px;background:#2d2d6a;border-radius:50%"></div>
<div class="a" style="left:92px;top:873px;width:7px;height:7px;background:#2d5a7a;border-radius:50%"></div>
<div class="a" style="left:105px;top:883px;width:7px;height:7px;background:#c88a2a;border-radius:50%"></div>
<div class="a" style="left:155px;top:831px;width:7px;height:7px;background:#8fd0c4;border-radius:50%"></div>
<div class="a" style="left:171px;top:841px;width:7px;height:7px;background:#3aa6a0;border-radius:50%"></div>
<div class="a" style="left:176px;top:857px;width:7px;height:7px;background:#2d2d6a;border-radius:50%"></div>
<div class="a" style="left:174px;top:872px;width:7px;height:7px;background:#2d5a7a;border-radius:50%"></div>
<div class="a" style="left:155px;top:883px;width:7px;height:7px;background:#e09a30;border-radius:50%"></div>
<div class="a" style="left:72px;top:833px;width:12px;height:3px;background:#5a8ad8;opacity:.7"></div>
<div class="a" style="left:66px;top:842px;width:12px;height:3px;background:#5a8ad8;opacity:.7"></div>
<div class="a" style="left:58px;top:858px;width:12px;height:3px;background:#5a8ad8;opacity:.7"></div>
<div class="a" style="left:66px;top:874px;width:12px;height:3px;background:#5a8ad8;opacity:.7"></div>
<div class="a" style="left:72px;top:885px;width:12px;height:3px;background:#5a8ad8;opacity:.7"></div>
<div class="a" style="left:182px;top:833px;width:12px;height:3px;background:#888;opacity:.7"></div>
<div class="a" style="left:188px;top:842px;width:12px;height:3px;background:#888;opacity:.7"></div>
<div class="a" style="left:192px;top:858px;width:12px;height:3px;background:#888;opacity:.7"></div>
<div class="a" style="left:188px;top:874px;width:12px;height:3px;background:#888;opacity:.7"></div>
<div class="a" style="left:182px;top:885px;width:12px;height:3px;background:#888;opacity:.7"></div>
<div class="a" style="left:50px;top:902px;width:166px;height:6px;background:#c85a24;"></div>
<div class="a" style="left:50px;top:933px;width:166px;height:28px;background:linear-gradient(180deg,#fff,#f0f0f0);"></div>
<div class="a" style="left:64px;top:947px;width:50px;height:30px;background:transparent;border:1px solid #bbb;border-radius:50%"></div>
<div class="a" style="left:138px;top:941px;width:4px;height:16px;background:repeating-linear-gradient(180deg,#f5c400 0 4px,#2b6fd0 4px 8px);"></div>
<div class="a" style="left:144px;top:939px;width:48px;height:22px;background:#fff;"></div>
<div class="a" style="left:146px;top:943px;width:20px;height:5px;background:#999;opacity:.6"></div>
<svg style="left:166px;top:939px" width="20" height="22" viewBox="0 0 20 22"><path d="M1 20l5-14 4 10 4-12 4 16" fill="none" stroke="#4aa" stroke-width="1"/></svg>
<div class="a" style="left:178px;top:943px;width:12px;height:4px;background:#999;opacity:.6"></div>
<div class="a" style="left:12px;top:877px;width:145px;height:30px;background:rgba(88,90,92,0.9);border-radius:5px"></div>
<svg style="left:20px;top:884px" width="16" height="16" viewBox="0 0 16 16"><circle cx="8" cy="8" r="7.5" fill="#d8d8d8"/><circle cx="5.5" cy="6.5" r="1" fill="#555"/><circle cx="10.5" cy="6.5" r="1" fill="#555"/><path d="M4.5 9.5a4 3.5 0 0 0 7 0" fill="#555"/></svg>
<div class="a" style="left:42px;top:883px;width:1px;height:18px;background:#888;"></div>
<div class="t" style="left:50.2px;top:886.4px;font-size:14px;color:#c4c4c4;font-weight:normal;">说点什么...</div>
<div class="a" style="left:126px;top:883px;width:1px;height:18px;background:#888;"></div>
<svg style="left:138px;top:887px" width="6" height="10" viewBox="0 0 6 10"><path d="M5 0.5L1 5l4 4.5" fill="none" stroke="#ddd" stroke-width="1.5"/></svg>
<div class="a" style="left:327px;top:218px;width:1219px;height:686px;background:#fff;box-shadow:0 0 0 1px #d2d2d2"></div>
<div class="t" style="left:735.3px;top:302.2px;font-size:45px;color:#e2851b;font-weight:bold;letter-spacing:0.8px">一流课程申报准备</div>
<div class="a" style="left:446px;top:390px;width:997px;height:2px;background:#bfbfbf;"></div>
<div class="a" style="left:413px;top:466px;width:19px;height:19px;background:#000;border-radius:50%"></div>
<div class="t" style="left:435.6px;top:464.0px;font-size:24px;color:#000;font-weight:normal;letter-spacing:1.6px">两性一度</div>
<div class="a" style="left:413px;top:502px;width:19px;height:19px;background:#000;border-radius:50%"></div>
<div class="t" style="left:435.6px;top:500.0px;font-size:24px;color:#000;font-weight:normal;letter-spacing:1.6px">佐证截图或来自<span style="letter-spacing:-1.2px;font-size:22px">SPOC</span></div>
<div class="a" style="left:413px;top:655px;width:19px;height:19px;background:#000;border-radius:50%"></div>
<div class="t" style="left:435.6px;top:653.0px;font-size:24px;color:#000;font-weight:normal;letter-spacing:1.6px">必须附在线数据</div>
<div class="a" style="left:1159px;top:460px;width:19px;height:19px;background:#000;border-radius:50%"></div>
<div class="t" style="left:1181.6px;top:458.0px;font-size:24px;color:#000;font-weight:normal;letter-spacing:1.6px">建立</div>
<div class="a" style="left:1159px;top:496px;width:19px;height:19px;background:#000;border-radius:50%"></div>
<div class="t" style="left:1181.6px;top:494.0px;font-size:24px;color:#000;font-weight:normal;letter-spacing:1.6px">使用</div>
<div class="a" style="left:1159px;top:533px;width:19px;height:19px;background:#000;border-radius:50%"></div>
<div class="t" style="left:1181.6px;top:531.0px;font-size:24px;color:#000;font-weight:normal;letter-spacing:1.6px">管理</div>
<div class="a" style="left:1159px;top:649px;width:19px;height:19px;background:#000;border-radius:50%"></div>
<div class="t" style="left:1181.6px;top:647.0px;font-size:24px;color:#000;font-weight:normal;letter-spacing:1.6px">需放在<span style="letter-spacing:-1.2px;font-size:22px">SPOC</span>页面</div>
<div class="a" style="left:757px;top:447px;width:149px;height:148px;background:#e2841a;border-radius:0 50% 0 50%"></div>
<div class="a" style="left:965px;top:447px;width:149px;height:148px;background:#e2841a;border-radius:50% 0 50% 0"></div>
<div class="a" style="left:757px;top:629px;width:149px;height:148px;background:#818b74;border-radius:0 50% 0 50%"></div>
<div class="a" style="left:965px;top:629px;width:149px;height:148px;background:#818b74;border-radius:50% 0 50% 0"></div>
<div class="t" style="left:767.0px;top:463.7px;font-size:33px;color:#000;font-weight:normal;letter-spacing:2.5px">申报书</div>
<div class="t" style="left:810.2px;top:504.1px;font-size:38px;color:#fff;font-weight:bold;letter-spacing:1.5px">01</div>
<div class="t" style="left:989.1px;top:462.8px;font-size:32px;color:#ff0d0d;font-weight:bold;letter-spacing:-2.5px">SPOC</div>
<div class="t" style="left:1018.2px;top:504.1px;font-size:38px;color:#fff;font-weight:bold;letter-spacing:1.5px">02</div>
<div class="t" style="left:990.0px;top:548.7px;font-size:33px;color:#ff0d0d;font-weight:normal;letter-spacing:3px">私播课</div>
<div class="t" style="left:755.0px;top:650.6px;font-size:34px;color:#000;font-weight:normal;letter-spacing:1.5px">附件材料</div>
<div class="t" style="left:810.2px;top:686.1px;font-size:38px;color:#fff;font-weight:bold;letter-spacing:1.5px">03</div>
<div class="t" style="left:999.0px;top:650.6px;font-size:34px;color:#000;font-weight:normal;letter-spacing:4px">录课</div>
<div class="t" style="left:1018.2px;top:686.1px;font-size:38px;color:#fff;font-weight:bold;letter-spacing:1.5px">04</div>
<div class="a" style="left:327px;top:851px;width:1219px;height:6px;background:#e2851b;"></div>
<div class="a" style="left:327px;top:857px;width:1219px;height:1px;background:#fbe9d6;"></div>
<div class="a" style="left:327px;top:858px;width:1219px;height:46px;background:#bf5a2e;"></div>
<div class="a" style="left:0;top:0;width:1920px;height:1041px;transform-origin:0 0;transform:translate(49px,462px) scale(0.137) translate(-327px,-218px)"><div class="a" style="left:327px;top:218px;width:1219px;height:686px;background:#fff;box-shadow:0 0 0 1px #d2d2d2"></div>
<div class="t" style="left:735.3px;top:302.2px;font-size:45px;color:#e2851b;font-weight:bold;letter-spacing:0.8px">一流课程申报准备</div>
<div class="a" style="left:446px;top:390px;width:997px;height:2px;background:#bfbfbf;"></div>
<div class="a" style="left:413px;top:466px;width:19px;height:19px;background:#000;border-radius:50%"></div>
<div class="t" style="left:435.6px;top:464.0px;font-size:24px;color:#000;font-weight:normal;letter-spacing:1.6px">两性一度</div>
<div class="a" style="left:413px;top:502px;width:19px;height:19px;background:#000;border-radius:50%"></div>
<div class="t" style="left:435.6px;top:500.0px;font-size:24px;color:#000;font-weight:normal;letter-spacing:1.6px">佐证截图或来自<span style="letter-spacing:-1.2px;font-size:22px">SPOC</span></div>
<div class="a" style="left:413px;top:655px;width:19px;height:19px;background:#000;border-radius:50%"></div>
<div class="t" style="left:435.6px;top:653.0px;font-size:24px;color:#000;font-weight:normal;letter-spacing:1.6px">必须附在线数据</div>
<div class="a" style="left:1159px;top:460px;width:19px;height:19px;background:#000;border-radius:50%"></div>
<div class="t" style="left:1181.6px;top:458.0px;font-size:24px;color:#000;font-weight:normal;letter-spacing:1.6px">建立</div>
<div class="a" style="left:1159px;top:496px;width:19px;height:19px;background:#000;border-radius:50%"></div>
<div class="t" style="left:1181.6px;top:494.0px;font-size:24px;color:#000;font-weight:normal;letter-spacing:1.6px">使用</div>
<div class="a" style="left:1159px;top:533px;width:19px;height:19px;background:#000;border-radius:50%"></div>
<div class="t" style="left:1181.6px;top:531.0px;font-size:24px;color:#000;font-weight:normal;letter-spacing:1.6px">管理</div>
<div class="a" style="left:1159px;top:649px;width:19px;height:19px;background:#000;border-radius:50%"></div>
<div class="t" style="left:1181.6px;top:647.0px;font-size:24px;color:#000;font-weight:normal;letter-spacing:1.6px">需放在<span style="letter-spacing:-1.2px;font-size:22px">SPOC</span>页面</div>
<div class="a" style="left:757px;top:447px;width:149px;height:148px;background:#e2841a;border-radius:0 50% 0 50%"></div>
<div class="a" style="left:965px;top:447px;width:149px;height:148px;background:#e2841a;border-radius:50% 0 50% 0"></div>
<div class="a" style="left:757px;top:629px;width:149px;height:148px;background:#818b74;border-radius:0 50% 0 50%"></div>
<div class="a" style="left:965px;top:629px;width:149px;height:148px;background:#818b74;border-radius:50% 0 50% 0"></div>
<div class="t" style="left:767.0px;top:463.7px;font-size:33px;color:#000;font-weight:normal;letter-spacing:2.5px">申报书</div>
<div class="t" style="left:810.2px;top:504.1px;font-size:38px;color:#fff;font-weight:bold;letter-spacing:1.5px">01</div>
<div class="t" style="left:989.1px;top:462.8px;font-size:32px;color:#ff0d0d;font-weight:bold;letter-spacing:-2.5px">SPOC</div>
<div class="t" style="left:1018.2px;top:504.1px;font-size:38px;color:#fff;font-weight:bold;letter-spacing:1.5px">02</div>
<div class="t" style="left:990.0px;top:548.7px;font-size:33px;color:#ff0d0d;font-weight:normal;letter-spacing:3px">私播课</div>
<div class="t" style="left:755.0px;top:650.6px;font-size:34px;color:#000;font-weight:normal;letter-spacing:1.5px">附件材料</div>
<div class="t" style="left:810.2px;top:686.1px;font-size:38px;color:#fff;font-weight:bold;letter-spacing:1.5px">03</div>
<div class="t" style="left:999.0px;top:650.6px;font-size:34px;color:#000;font-weight:normal;letter-spacing:4px">录课</div>
<div class="t" style="left:1018.2px;top:686.1px;font-size:38px;color:#fff;font-weight:bold;letter-spacing:1.5px">04</div>
<div class="a" style="left:327px;top:851px;width:1219px;height:6px;background:#e2851b;"></div>
<div class="a" style="left:327px;top:857px;width:1219px;height:1px;background:#fbe9d6;"></div>
<div class="a" style="left:327px;top:858px;width:1219px;height:46px;background:#bf5a2e;"></div></div>
<svg style="left:716px;top:342px" width="26" height="32" viewBox="0 0 26 32"><g fill="#000"><path d="M11 1l-2.5 3h5z M11 17l-2.5-3h5z M1 9l3-2.5v5z M21 9l-3-2.5v5z"/><path d="M11 3v12M3 9h16" stroke="#000" stroke-width="1"/></g><path d="M11 9v19l4.5-4 3 6.5 2.5-1-3-6.5h6z" fill="#fff" stroke="#000" stroke-width="1"/></svg>
<div class="a" style="left:1607px;top:205px;width:20px;height:652px;background:#f0f0f0;"></div>
<div class="a" style="left:1607px;top:206px;width:19px;height:19px;background:#fff;border:1px solid #c9c9c9"></div>
<svg style="left:1612px;top:213px" width="10" height="6" viewBox="0 0 10 6"><path d="M0 5.5L5 0.5 10 5.5z" fill="#222"/></svg>
<div class="a" style="left:1607px;top:274px;width:19px;height:24px;background:#fff;border:1px solid #c9c9c9"></div>
<div class="a" style="left:1607px;top:838px;width:19px;height:19px;background:#fff;border:1px solid #c9c9c9"></div>
<svg style="left:1612px;top:845px" width="10" height="6" viewBox="0 0 10 6"><path d="M0 0.5h10L5 5.5z" fill="#222"/></svg>
<svg style="left:1611px;top:860px" width="12" height="35" viewBox="0 0 12 35"><path d="M6 0L0 6h12z M6 6L0 12h12z M0 20h12L6 26z M0 26h12L6 32z" fill="#6f6f6f"/></svg>
<div class="a" style="left:262px;top:918px;width:1365px;height:1px;background:#d6d6d6;"></div>
<div class="a" style="left:263px;top:919px;width:1344px;height:42px;background:#e6e6e6;"></div>
<div class="t" style="left:274.0px;top:929.4px;font-size:16px;color:#555;font-weight:normal;letter-spacing:0.9px">单击此处添加备注</div>
<div class="a" style="left:1614px;top:517px;width:13px;height:34px;background:#8a8a8a;border-radius:4px 0 0 4px"></div>
<svg style="left:1617px;top:527px" width="8" height="13" viewBox="0 0 8 13"><path d="M1.5 1l5 5.5-5 5.5" fill="none" stroke="#fff" stroke-width="1.6"/></svg>
<div class="a" style="left:46px;top:459px;width:174px;height:100px;background:transparent;border:3px solid #7a1315"></div>

<!-- ============ STATUS BAR ============ -->
<div class="a" style="left:8px;top:961px;width:1619px;height:1px;background:#d0d0d0"></div>
<div class="a" style="left:8px;top:962px;width:1619px;height:23px;background:#f3f3f3"></div>
<div class="t" style="left:20.2px;top:967.5px;font-size:13px;color:#444;font-weight:normal;letter-spacing:0.7px">幻灯片 第 3 张，共 25 张</div>
<svg style="left:192px;top:966px" width="17" height="15" viewBox="0 0 17 15"><path d="M1 1.5c2-1 5-1 7 1v11c-2-2-5-2-7-1z M8 2.5c1.5-1.5 3.5-1.5 5-1" fill="none" stroke="#666" stroke-width="1"/><path d="M10 11l5.5-5.5 1.2 1.2-5.5 5.5-1.7.5z" fill="#666"/></svg>
<div class="t" style="left:226.2px;top:967.5px;font-size:13px;color:#444;font-weight:normal;letter-spacing:1px">简体中文(中国大陆)</div>
<svg style="left:362px;top:966px" width="18" height="16" viewBox="0 0 18 16"><circle cx="7" cy="7" r="5.5" fill="none" stroke="#555" stroke-width="1.4" stroke-dasharray="26 8"/><path d="M9 10l6 6M15 10l-6 6" stroke="#333" stroke-width="1.5"/></svg>
<div class="t" style="left:380.2px;top:967.5px;font-size:13px;color:#333;font-weight:bold;letter-spacing:0.5px">辅助功能: 调查</div>
<svg style="left:1090px;top:967px" width="13" height="14" viewBox="0 0 13 14"><path d="M6.5 0.5l-3 3h6z" fill="#666"/><path d="M0 6.5h13M2 9.5h11M0 12.5h13" stroke="#666" stroke-width="1"/></svg>
<div class="t" style="left:1107.2px;top:967.5px;font-size:13px;color:#444;font-weight:normal;letter-spacing:3px">备注</div>
<svg style="left:1156px;top:966px" width="17" height="16" viewBox="0 0 17 16"><path d="M1.5 1h14a1 1 0 0 1 1 1v8a1 1 0 0 1-1 1H7l-4 4v-4H1.5a1 1 0 0 1-1-1V2a1 1 0 0 1 1-1z" fill="#555"/></svg>
<div class="t" style="left:1175.2px;top:967.5px;font-size:13px;color:#444;font-weight:normal;letter-spacing:3px">批注</div>
<div class="a" style="left:1223px;top:962px;width:45px;height:23px;background:#c8c8c8;"></div>
<svg style="left:1238px;top:966px" width="16" height="15" viewBox="0 0 16 15"><rect x="0.5" y="0.5" width="15" height="14" fill="none" stroke="#777"/><rect x="5.5" y="3.5" width="7" height="6" fill="none" stroke="#777"/><path d="M3 1v13" stroke="#777"/></svg>
<svg style="left:1283px;top:966px" width="16" height="15" viewBox="0 0 16 15"><rect x="0.5" y="0.5" width="6" height="5" fill="none" stroke="#777"/><rect x="9.5" y="0.5" width="6" height="5" fill="none" stroke="#777"/><rect x="0.5" y="8.5" width="6" height="5" fill="none" stroke="#777"/><rect x="9.5" y="8.5" width="6" height="5" fill="none" stroke="#777"/></svg>
<svg style="left:1328px;top:966px" width="16" height="15" viewBox="0 0 16 15"><path d="M0.5 1.5h7v13h-7z M8.5 1.5h7v13h-7z" fill="none" stroke="#777"/><path d="M2 4h4M2 6.5h4M2 9h4M10 4h4M10 6.5h4M10 9h4" stroke="#999"/></svg>
<svg style="left:1374px;top:966px" width="16" height="16" viewBox="0 0 16 16"><rect x="0.5" y="1.5" width="15" height="8" fill="none" stroke="#777"/><path d="M0 1h16M8 10v4M5 15h6" stroke="#777"/></svg>
<div class="a" style="left:1409px;top:973px;width:10px;height:1px;background:#555;"></div>
<div class="a" style="left:1424px;top:973px;width:110px;height:1px;background:#555;"></div>
<div class="a" style="left:1468px;top:966px;width:6px;height:14px;background:#555;"></div>
<div class="a" style="left:1479px;top:970px;width:1px;height:7px;background:#555;"></div>
<svg style="left:1540px;top:968px" width="11" height="11" viewBox="0 0 11 11"><path d="M5.5 0v11M0 5.5h11" stroke="#555" stroke-width="1"/></svg>
<div class="t" style="left:1562.1px;top:966.5px;font-size:15px;color:#444;font-weight:normal;">85%</div>
<svg style="left:1608px;top:967px" width="13" height="13" viewBox="0 0 13 13"><rect x="0.5" y="0.5" width="12" height="12" fill="none" stroke="#888"/><path d="M3 3l2.5 2.5M10 3L7.5 5.5M3 10l2.5-2.5M10 10L7.5 7.5" stroke="#888"/></svg>

<!-- ============ RIGHT PANEL ============ -->
<div class="a" style="left:1627px;top:59px;width:293px;height:929px;background:#2b2e32"></div>
<div class="a" style="left:0;top:0;width:1920px;height:1041px;clip-path:inset(59px 0 53px 1627px)"><div class="a" style="left:1635px;top:59px;width:285px;height:929px;background:linear-gradient(90deg,#55585e 0%,#47494e 30%,#2f3135 80%,#2a2c30 100%);"></div>
<div class="a" style="left:1635px;top:59px;width:8px;height:929px;background:#55585d;"></div>
<div class="a" style="left:1642px;top:28px;width:270px;height:151px;background:#2b2e32;border:2px solid #19d46a"></div>
<svg style="left:1735px;top:51px" width="84" height="84" viewBox="0 0 84 84"><defs><clipPath id="c0"><circle cx="42" cy="42" r="42"/></clipPath></defs><g clip-path="url(#c0)"><rect width="84" height="84" fill="#efe5de"/><path d="M0 50 Q10 46 22 52 L44 50 Q50 60 48 84 H0z" fill="#e5c01c"/><path d="M26 56 L29 84" stroke="#d8d0b0" stroke-width="2"/><path d="M30 72 l8-4 3 6-8 3z" fill="#b84a2a"/><ellipse cx="27" cy="36" rx="15" ry="17" fill="#f0c6ac"/><path d="M11 30 Q12 12 28 10 Q40 12 40 26 Q30 18 14 30z" fill="#b07a4a"/><path d="M20 46 Q27 52 34 46" fill="#fff" stroke="#8a3a3a" stroke-width="1.5"/><ellipse cx="57" cy="50" rx="14" ry="17" fill="#ecc4ac"/><path d="M42 42 Q42 27 58 27 Q76 28 76 50 L72 46 Q68 34 56 35 Q47 36 44 48z" fill="#201816"/><circle cx="51" cy="47" r="5" fill="none" stroke="#5a4040" stroke-width="1.6"/><circle cx="63" cy="47" r="5" fill="none" stroke="#5a4040" stroke-width="1.6"/><path d="M52 57 Q57 61 62 57" stroke="#a04a4a" stroke-width="1.5" fill="none"/><path d="M36 84 Q40 66 52 64 L68 62 Q80 66 84 74 V84z" fill="#eee"/><path d="M40 76 l10-8 M44 82 l14-12 M56 84 l14-14 M66 84 l14-14 M48 70 l10-6" stroke="#222" stroke-width="3"/></g></svg>
<div class="a" style="left:1643px;top:187px;width:269px;height:151px;background:#2b2e32;border:2px solid #5b5e63"></div>
<svg style="left:1735px;top:210px" width="84" height="84" viewBox="0 0 84 84"><defs><clipPath id="c1"><circle cx="42" cy="42" r="42"/></clipPath></defs><g clip-path="url(#c1)"><rect width="84" height="84" fill="#fbfcf8"/><circle cx="20" cy="40" r="3" fill="#dff0d0"/><circle cx="66" cy="52" r="3" fill="#dff0d0"/><circle cx="24" cy="70" r="3" fill="#dff0d0"/><circle cx="62" cy="74" r="3" fill="#dff0d0"/><path d="M20 10 L33 44 M70 13 L62 44" stroke="#1f1f22" stroke-width="2.5"/><path d="M27 12 h8 v20 h-8z" fill="#2a2a2a"/><ellipse cx="46" cy="34" rx="14" ry="13" fill="#f4dccb"/><path d="M30 30 Q28 12 46 12 Q63 13 62 30 Q56 22 46 24 Q38 22 32 34z" fill="#a8703e"/><circle cx="41" cy="34" r="2.2" fill="#6a4a30"/><circle cx="55" cy="34" r="2.2" fill="#6a4a30"/><path d="M28 44 L62 46 L60 80 L25 76z" fill="#1f1f22"/><circle cx="46" cy="52" r="1.3" fill="#ddd"/><rect x="38" y="61" width="14" height="8" fill="#6ab87a"/><rect x="49" y="62" width="3" height="4" fill="#e05050"/></g></svg>
<div class="a" style="left:1645px;top:313px;width:67px;height:23px;background:#111214;border-radius:0 7px 0 0"></div>
<svg style="left:1647px;top:319px" width="13" height="15" viewBox="0 0 13 15"><rect x="4" y="0.5" width="5.5" height="9" rx="2.7" fill="#fff"/><path d="M1.8 7a5 4.5 0 0 0 10 0" fill="none" stroke="#fff" stroke-width="1.3"/><path d="M6.8 12v2.5M3.8 14.5h6" stroke="#fff" stroke-width="1.3"/><path d="M1 14L12.5 1.5" stroke="#f04040" stroke-width="1.5"/></svg>
<div class="t" style="left:1664.3px;top:319.5px;font-size:12px;color:#fff;font-weight:normal;letter-spacing:0.3px">许漫乔</div>
<div class="a" style="left:1643px;top:346px;width:269px;height:151px;background:#2b2e32;border:2px solid #5b5e63"></div>
<div class="a" style="left:1735px;top:369px;width:84px;height:84px;background:#3d6bbd;border-radius:50%"></div>
<div class="t" style="left:1743.1px;top:397.7px;font-size:32px;color:#fff;font-weight:normal;letter-spacing:5px">俊聪</div>
<div class="a" style="left:1645px;top:472px;width:67px;height:23px;background:#111214;border-radius:0 7px 0 0"></div>
<svg style="left:1647px;top:478px" width="13" height="15" viewBox="0 0 13 15"><rect x="4" y="0.5" width="5.5" height="9" rx="2.7" fill="#fff"/><path d="M1.8 7a5 4.5 0 0 0 10 0" fill="none" stroke="#fff" stroke-width="1.3"/><path d="M6.8 12v2.5M3.8 14.5h6" stroke="#fff" stroke-width="1.3"/><path d="M1 14L12.5 1.5" stroke="#f04040" stroke-width="1.5"/></svg>
<div class="t" style="left:1664.3px;top:478.5px;font-size:12px;color:#fff;font-weight:normal;letter-spacing:0.3px">姜俊聪</div>
<div class="a" style="left:1643px;top:505px;width:269px;height:151px;background:#2b2e32;border:2px solid #5b5e63"></div>
<svg style="left:1735px;top:528px" width="84" height="84" viewBox="0 0 84 84"><defs><clipPath id="c3"><circle cx="42" cy="42" r="42"/></clipPath></defs><g clip-path="url(#c3)"><defs><linearGradient id="gs" x1="0" y1="0" x2="0" y2="1"><stop offset="0" stop-color="#cfcbdb"/><stop offset="0.3" stop-color="#ddd2d8"/><stop offset="0.42" stop-color="#d9a67e"/><stop offset="0.5" stop-color="#9a92a0"/><stop offset="0.6" stop-color="#7f7884"/><stop offset="1" stop-color="#3e383c"/></linearGradient></defs><rect width="84" height="84" fill="url(#gs)"/><ellipse cx="68" cy="30" rx="16" ry="9" fill="#e9a06a" opacity=".9"/><ellipse cx="70" cy="33" rx="7" ry="5" fill="#f6c27a"/><ellipse cx="20" cy="32" rx="18" ry="4" fill="#e2a07a" opacity=".8"/><path d="M0 56 L10 46 L22 50 L30 42 L36 50 L56 48 L84 50 V84 H0z" fill="#5a5660" opacity=".85"/><path d="M24 42v16M30 40v18M68 40v20" stroke="#6a6a78" stroke-width="2.5"/><path d="M58 48 Q48 62 30 84 L40 84 Q58 66 68 52z" fill="#b89a94"/><path d="M22 84 L46 62 L62 78 L60 84z" fill="#2e2a2c"/></g></svg>
<div class="a" style="left:1645px;top:631px;width:67px;height:23px;background:#111214;border-radius:0 7px 0 0"></div>
<svg style="left:1647px;top:637px" width="13" height="15" viewBox="0 0 13 15"><rect x="4" y="0.5" width="5.5" height="9" rx="2.7" fill="#fff"/><path d="M1.8 7a5 4.5 0 0 0 10 0" fill="none" stroke="#fff" stroke-width="1.3"/><path d="M6.8 12v2.5M3.8 14.5h6" stroke="#fff" stroke-width="1.3"/><path d="M1 14L12.5 1.5" stroke="#f04040" stroke-width="1.5"/></svg>
<div class="t" style="left:1664.3px;top:637.5px;font-size:12px;color:#fff;font-weight:normal;letter-spacing:0.3px">谢伟峰</div>
<div class="a" style="left:1643px;top:664px;width:269px;height:151px;background:#2b2e32;border:2px solid #5b5e63"></div>
<svg style="left:1735px;top:687px" width="84" height="84" viewBox="0 0 84 84"><defs><clipPath id="c4"><circle cx="42" cy="42" r="42"/></clipPath></defs><g clip-path="url(#c4)"><defs><linearGradient id="gw" x1="0" y1="0" x2="1" y2="1"><stop offset="0" stop-color="#d6b4cf"/><stop offset="0.45" stop-color="#b8c4de"/><stop offset="0.7" stop-color="#e4bfd5"/><stop offset="1" stop-color="#c4b0d8"/></linearGradient></defs><rect width="84" height="84" fill="url(#gw)"/><ellipse cx="14" cy="52" rx="14" ry="6" fill="#9dbde0" opacity=".8"/><path d="M20 46 Q18 8 42 7 Q66 8 64 46 Q66 56 54 56 L30 56 Q18 56 20 46z" fill="#2a1210"/><ellipse cx="42" cy="34" rx="12.5" ry="17" fill="#f9e2d2"/><path d="M29 26 Q34 14 46 16 Q54 20 55 30 Q50 20 40 20z" fill="#2a1210"/><circle cx="36" cy="34" r="5.5" fill="none" stroke="#6a6a6a" stroke-width="1.3"/><circle cx="49" cy="34" r="5.5" fill="none" stroke="#6a6a6a" stroke-width="1.3"/><path d="M40 46 Q42 47.5 44 46" stroke="#e07a7a" stroke-width="1.5" fill="none"/><rect x="38" y="50" width="8" height="10" fill="#f3d8c6"/><path d="M14 84 Q16 62 36 58 L48 58 Q68 62 70 84z" fill="#e3e0d3"/><path d="M34 58 L50 58 L48 84 L37 84z" fill="#f6f2e2"/></g></svg>
<div class="a" style="left:1645px;top:790px;width:67px;height:23px;background:#111214;border-radius:0 7px 0 0"></div>
<svg style="left:1647px;top:796px" width="13" height="15" viewBox="0 0 13 15"><rect x="4" y="0.5" width="5.5" height="9" rx="2.7" fill="#fff"/><path d="M1.8 7a5 4.5 0 0 0 10 0" fill="none" stroke="#fff" stroke-width="1.3"/><path d="M6.8 12v2.5M3.8 14.5h6" stroke="#fff" stroke-width="1.3"/><path d="M1 14L12.5 1.5" stroke="#f04040" stroke-width="1.5"/></svg>
<div class="t" style="left:1664.3px;top:796.5px;font-size:12px;color:#fff;font-weight:normal;letter-spacing:0.3px">刘晓钰</div>
<div class="a" style="left:1643px;top:823px;width:269px;height:151px;background:#2b2e32;border:2px solid #5b5e63"></div>
<svg style="left:1735px;top:846px" width="84" height="84" viewBox="0 0 84 84"><defs><clipPath id="c5"><circle cx="42" cy="42" r="42"/></clipPath></defs><g clip-path="url(#c5)"><rect width="84" height="84" fill="#d4c8bc"/><rect width="84" height="26" fill="#8fb6e2"/><ellipse cx="29" cy="22" rx="13" ry="11" fill="#d9d6d4"/><ellipse cx="13" cy="25" rx="9" ry="8" fill="#d2d0ce"/><rect x="42" y="16" width="16" height="16" fill="#8a9088"/><rect x="0" y="28" width="66" height="38" fill="#dcd2c6"/><rect x="48" y="30" width="18" height="12" fill="#c8a078"/><circle cx="53" cy="36" r="3" fill="#222"/><path d="M10 50h4v6h-4zM18 50h4v6h-4zM26 50h4v6h-4zM50 46h3v6h-3zM56 46h3v6h-3zM62 46h3v6h-3z" fill="#5a4a44"/><path d="M10 60h4v6h-4zM20 60h4v6h-4zM30 60h4v6h-4z" fill="#2a2422"/><path d="M66 22 L84 14 V84 H66z" fill="#cdc6bf"/><path d="M0 26 L8 24 L8 46 L0 48z" fill="#a86e58"/><path d="M0 66 H70 L84 84 H0z" fill="#baa286"/><path d="M40 84 L46 66 M54 84 L55 66" stroke="#e6dccc" stroke-width="1"/></g></svg>
<div class="a" style="left:1645px;top:949px;width:67px;height:23px;background:#111214;border-radius:0 7px 0 0"></div>
<svg style="left:1647px;top:955px" width="13" height="15" viewBox="0 0 13 15"><rect x="4" y="0.5" width="5.5" height="9" rx="2.7" fill="#fff"/><path d="M1.8 7a5 4.5 0 0 0 10 0" fill="none" stroke="#fff" stroke-width="1.3"/><path d="M6.8 12v2.5M3.8 14.5h6" stroke="#fff" stroke-width="1.3"/><path d="M1 14L12.5 1.5" stroke="#f04040" stroke-width="1.5"/></svg>
<div class="t" style="left:1664.3px;top:955.5px;font-size:12px;color:#fff;font-weight:normal;letter-spacing:0.3px">彭文华</div>
<div class="a" style="left:1643px;top:982px;width:269px;height:151px;background:#2b2e32;border:2px solid #5b5e63"></div>
<div class="a" style="left:1644px;top:155px;width:117px;height:23px;background:#111214;border-radius:0 7px 0 0"></div>
<svg style="left:1647px;top:158px" width="14" height="17" viewBox="0 0 14 17"><rect x="4" y="0.5" width="6" height="10" rx="3" fill="#fff"/><path d="M1.5 8a5.5 5 0 0 0 11 0" fill="none" stroke="#fff" stroke-width="1.4"/><path d="M7 13v3M3.5 16h7" stroke="#fff" stroke-width="1.4"/></svg>
<svg style="left:1663px;top:159px" width="14" height="15" viewBox="0 0 14 15"><rect x="0.5" y="0.5" width="13" height="10" rx="1.5" fill="#fff"/><path d="M4 8c.3-2 1.5-3 4-3M7 3.5l1.8 1.5L7 6.5" fill="none" stroke="#222" stroke-width="1"/><rect x="3" y="12.5" width="8" height="1.6" fill="#fff"/></svg>
<div class="t" style="left:1679.2px;top:159.5px;font-size:13px;color:#fff;font-weight:normal;">宋敏正在共享</div>
<div class="a" style="left:1757px;top:68px;width:48px;height:20px;background:rgba(20,20,22,0.85);border-radius:4px"></div>
<svg style="left:1769px;top:72px" width="24" height="12" viewBox="0 0 24 12"><path d="M1 10L12 1l11 9" fill="none" stroke="#777" stroke-width="1.5"/></svg>
<div class="a" style="left:1757px;top:958px;width:48px;height:20px;background:#0d0e10;border-radius:4px"></div>
<svg style="left:1769px;top:963px" width="24" height="12" viewBox="0 0 24 12"><path d="M1 1l11 9 11-9" fill="none" stroke="#fff" stroke-width="1.6"/></svg>
<div class="a" style="left:1638px;top:528px;width:1px;height:22px;background:#9a9a9a;"></div>
<div class="a" style="left:1640px;top:528px;width:1px;height:22px;background:#9a9a9a;"></div></div>

<!-- black line + bottom toolbar -->
<div class="a" style="left:0;top:985px;width:1627px;height:3px;background:#1f2124"></div>
<div class="a" style="left:0;top:988px;width:1920px;height:53px;background:#fff"></div>
<div class="a" style="left:0;top:1040px;width:1920px;height:1px;background:#d5d5d5"></div>
<svg style="left:27px;top:995px" width="20" height="22" viewBox="0 0 20 22"><rect x="6" y="0.5" width="7" height="12" rx="3.5" fill="#45474d"/><path d="M2.5 9a7 6.5 0 0 0 14 0" fill="none" stroke="#45474d" stroke-width="1.6"/><path d="M9.5 16v3M5 20.5h9" stroke="#45474d" stroke-width="1.8"/><path d="M1 17L16.5 1.5" stroke="#f23c3c" stroke-width="1.6"/></svg>
<div class="t" style="left:13.3px;top:1021.5px;font-size:12px;color:#111;font-weight:normal;">解除静音</div>
<svg style="left:60px;top:1010px" width="10" height="6" viewBox="0 0 10 6"><path d="M0.5 5L5 1l4.5 4" fill="none" stroke="#444" stroke-width="1.3"/></svg>
<svg style="left:92px;top:996px" width="22" height="19" viewBox="0 0 22 19"><rect x="0" y="1.5" width="16" height="14" rx="2.5" fill="#45474d"/><path d="M16.5 5.5l5-2.5v10.5l-5-2.5z" fill="#45474d"/><path d="M1.5 17.5L18 1" stroke="#f23c3c" stroke-width="1.6"/></svg>
<div class="t" style="left:80.3px;top:1021.5px;font-size:12px;color:#111;font-weight:normal;">开启视频</div>
<svg style="left:127px;top:1010px" width="10" height="6" viewBox="0 0 10 6"><path d="M0.5 5L5 1l4.5 4" fill="none" stroke="#444" stroke-width="1.3"/></svg>
<svg style="left:777px;top:996px" width="21" height="21" viewBox="0 0 21 21"><rect x="0.5" y="0.5" width="20" height="15" rx="2.5" fill="#1fbf5f"/><rect x="3" y="3" width="15" height="10" rx="1" fill="#2d3035"/><path d="M7 10.5c.5-3 2.5-4 6-4M11 4.5l2.5 2-2.5 2" fill="none" stroke="#fff" stroke-width="1.2"/><rect x="5" y="18" width="11" height="2" rx="1" fill="#1fbf5f"/></svg>
<div class="t" style="left:764.3px;top:1021.5px;font-size:12px;color:#111;font-weight:normal;">共享屏幕</div>
<svg style="left:811px;top:1010px" width="10" height="6" viewBox="0 0 10 6"><path d="M0.5 5L5 1l4.5 4" fill="none" stroke="#444" stroke-width="1.3"/></svg>
<svg style="left:842px;top:996px" width="21" height="21" viewBox="0 0 21 21"><circle cx="8" cy="5" r="4.5" fill="#45474d"/><path d="M0 19c0-6 3-9 8-9 2 0 3 .5 4 1" fill="#45474d"/><path d="M0.5 19.5a7.5 8 0 0 1 10.5-7" fill="#45474d"/><circle cx="15" cy="15" r="5" fill="#45474d"/><circle cx="15" cy="15" r="3.7" fill="#fff"/><path d="M15 12.5v5M12.5 15h5" stroke="#45474d" stroke-width="1.3"/></svg>
<div class="t" style="left:840.3px;top:1021.5px;font-size:12px;color:#111;font-weight:normal;">邀请</div>
<svg style="left:895px;top:995px" width="24" height="21" viewBox="0 0 24 21"><circle cx="9" cy="6" r="5" fill="#45474d"/><path d="M0 20c0-7 4-9 9-9s9 2 9 9z" fill="#45474d"/><path d="M13 1.5a5 5 0 0 1 2 9M17 11c4 1 6 4 6 9h-3" fill="none" stroke="#45474d" stroke-width="2"/></svg>
<div class="t" style="left:885.3px;top:1021.5px;font-size:12px;color:#111;font-weight:normal;">成员(39)</div>
<svg style="left:953px;top:996px" width="19" height="19" viewBox="0 0 19 19"><path d="M2 0.5h15a1.5 1.5 0 0 1 1.5 1.5v11a1.5 1.5 0 0 1-1.5 1.5H7l-4.5 4v-4H2A1.5 1.5 0 0 1 .5 13V2A1.5 1.5 0 0 1 2 .5z" fill="#45474d"/><circle cx="5" cy="7.5" r="1.3" fill="#fff"/><circle cx="9.5" cy="7.5" r="1.3" fill="#fff"/><circle cx="14" cy="7.5" r="1.3" fill="#fff"/></svg>
<div class="t" style="left:949.3px;top:1021.5px;font-size:12px;color:#111;font-weight:normal;">聊天</div>
<svg style="left:1006px;top:995px" width="20" height="20" viewBox="0 0 20 20"><circle cx="10" cy="10" r="9" fill="none" stroke="#45474d" stroke-width="1.8"/><circle cx="10" cy="10" r="5.5" fill="#45474d"/></svg>
<div class="t" style="left:1004.3px;top:1021.5px;font-size:12px;color:#111;font-weight:normal;">录制</div>
<svg style="left:1059px;top:995px" width="23" height="21" viewBox="0 0 23 21"><circle cx="13" cy="12" r="8.5" fill="#45474d"/><path d="M2 9V3M4.5 8V1.5M7 8V2M9.5 8.5V3.5" stroke="#45474d" stroke-width="2.2" stroke-linecap="round"/><path d="M10 15a3 3 0 0 0 6 0z" fill="#fff"/><circle cx="10.5" cy="11" r="1" fill="#fff"/><circle cx="15.5" cy="11" r="1" fill="#fff"/></svg>
<div class="t" style="left:1058.3px;top:1021.5px;font-size:12px;color:#111;font-weight:normal;">回应</div>
<svg style="left:1114px;top:995px" width="22" height="21" viewBox="0 0 22 21"><rect x="0.5" y="2" width="9" height="8" rx="1.5" fill="#45474d"/><rect x="0.5" y="12" width="9" height="8" rx="1.5" fill="#45474d"/><rect x="11.5" y="12" width="9" height="8" rx="1.5" fill="#45474d"/><rect x="11.5" y="2" width="9" height="8" rx="1.5" fill="#45474d"/><circle cx="18" cy="4" r="4" fill="#f23c3c" stroke="#fff" stroke-width="1"/></svg>
<div class="t" style="left:1112.3px;top:1021.5px;font-size:12px;color:#111;font-weight:normal;">应用</div>
<svg style="left:1167px;top:995px" width="21" height="21" viewBox="0 0 21 21"><path d="M10.5 0l2.2 2.4 3.2-.5.7 3.1 3 1.4-1.2 3 1.6 2.8-2.8 1.6-.1 3.2-3.2.3L12 20l-1.5-.3L8 21l-2.2-2.4-3.2.2-.5-3.2L0 14l1.2-3L0 8l2.7-1.6.2-3.2 3.2-.3z" fill="#45474d"/><circle cx="10.5" cy="10.5" r="3.5" fill="#fff"/></svg>
<div class="t" style="left:1166.3px;top:1021.5px;font-size:12px;color:#111;font-weight:normal;">设置</div>
<div class="a" style="left:1826px;top:998px;width:82px;height:32px;background:#fff;border:1px solid #f05a5a;border-radius:5px"></div>
<div class="t" style="left:1838.2px;top:1007.4px;font-size:14px;color:#ef4b4b;font-weight:normal;">离开会议</div>

<!-- speaker box -->
<div class="a" style="left:1405px;top:25px;width:242px;height:36px;background:#2c2f33;border:1px solid #151618"></div>
<div class="t" style="left:1414px;top:37px;font-size:12px;color:#fff">正在讲话:&nbsp;&nbsp;宋敏;</div>
<svg style="left:1607px;top:31px" width="40" height="24"><path d="M0 14l9-9 9 9-9 9z" fill="#45484d" opacity=".8"/><path d="M14 14l9-9 9 9-9 9z" fill="#3f4247" opacity=".8"/><path d="M9 5l5 5" stroke="#3a3d42" stroke-width="2"/></svg>
</body>
</html>
